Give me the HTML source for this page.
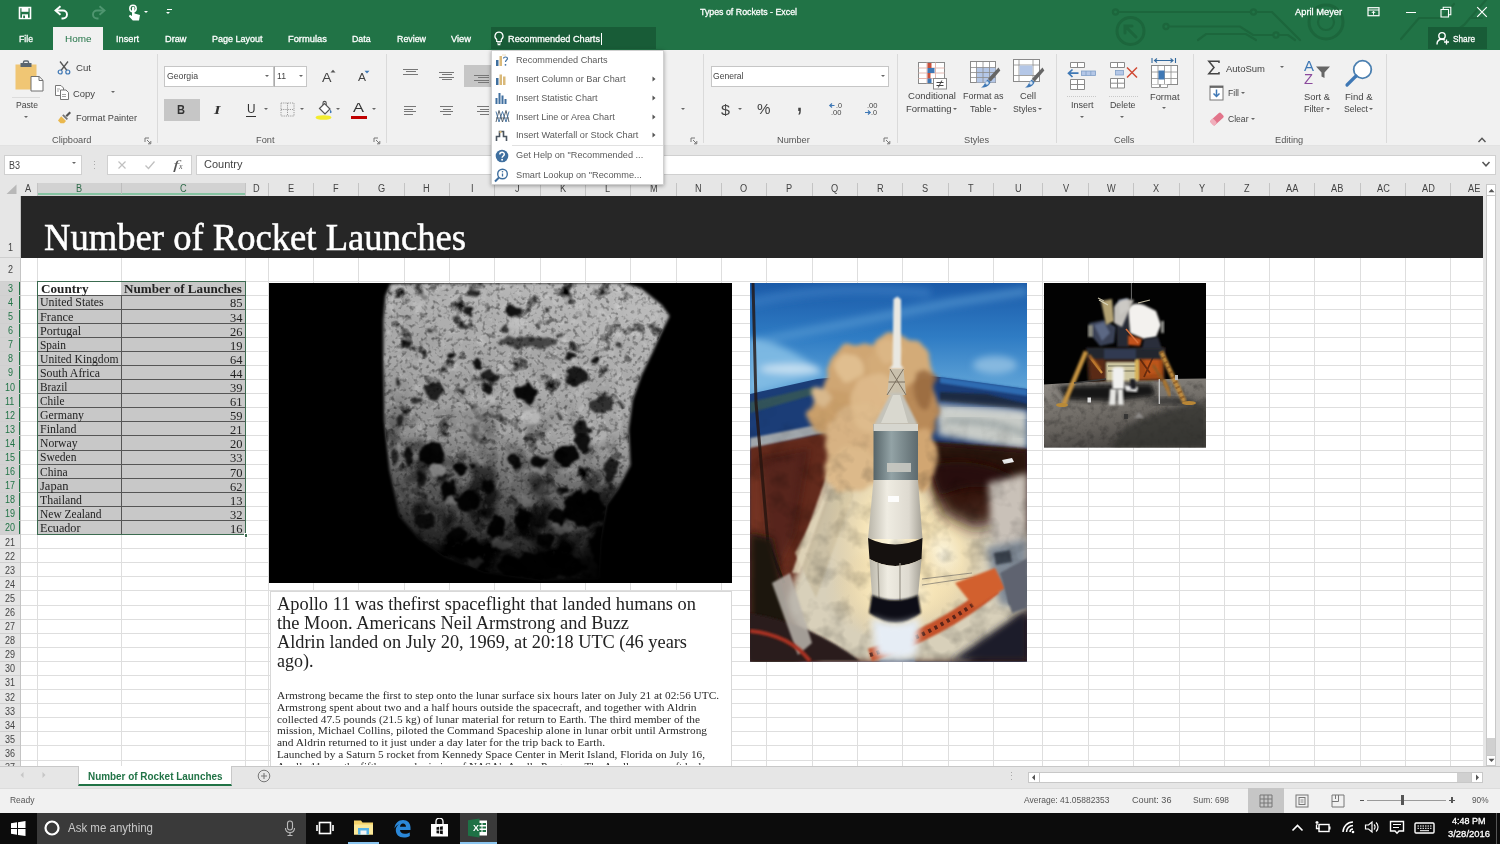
<!DOCTYPE html>
<html><head><meta charset="utf-8"><title>Types of Rockets - Excel</title>
<style>
html,body{margin:0;padding:0;}
body{width:1500px;height:844px;overflow:hidden;position:relative;background:#fff;font-family:"Liberation Sans",sans-serif;}
.b{position:absolute;display:block;}
.t{position:absolute;display:block;white-space:pre;transform-origin:0 50%;}
</style></head><body>

<div class="b" style="left:0px;top:0px;width:1500.00px;height:50.00px;background:#217346;"></div>
<svg class="b" style="left:1050px;top:0px;" width="450" height="50" viewBox="0 0 450 50"><g fill="none" stroke="#1c663c" stroke-width="2.2" stroke-linecap="round">
<circle cx="65.5" cy="12" r="2.6"/><path d="M68.5 12H201"/><circle cx="203.5" cy="12" r="2.6"/><path d="M206 12H222L250 40"/>
<circle cx="116" cy="26.5" r="2.6"/><path d="M119 26.5H190L203 35H223"/><circle cx="226" cy="35" r="2.6"/><path d="M229 35H238L245 40"/>
<path d="M148 40L156 34H196L206 40"/>
<circle cx="80.5" cy="31" r="13.5" stroke-width="3"/><path d="M86 37L75 26M75 33V26H82" stroke-width="3"/>
<circle cx="276" cy="22" r="17" stroke-width="3"/><circle cx="276" cy="22" r="8"/>
<path d="M351 39L369 18H392L404 4"/><path d="M395 39L414 25L436 0"/><path d="M420 18H432"/>
</g></svg>
<svg class="b" style="left:18px;top:6px;" width="14" height="14" viewBox="0 0 14 14"><path d="M1.5 1.5h11v11h-11z" fill="none" stroke="#fff" stroke-width="1.6"/><rect x="3.5" y="1.5" width="7" height="4.3" fill="#fff"/><rect x="4" y="8.3" width="6" height="4.5" fill="#fff"/><rect x="5.2" y="9.6" width="1.8" height="2.5" fill="#217346"/></svg>
<svg class="b" style="left:54px;top:5px;" width="16" height="16" viewBox="0 0 16 16"><path d="M2.5 5.5H9a4 4 0 0 1 0 8H7.5" fill="none" stroke="#fff" stroke-width="1.9"/><path d="M6.5 1.2L1.5 5.5L6.5 9.8" fill="none" stroke="#fff" stroke-width="1.9"/></svg>
<svg class="b" style="left:90px;top:5px;" width="16" height="16" viewBox="0 0 16 16"><path d="M13.5 5.5H7a4 4 0 0 0 0 8H8.5" fill="none" stroke="#4f9670" stroke-width="1.9"/><path d="M9.5 1.2L14.5 5.5L9.5 9.8" fill="none" stroke="#4f9670" stroke-width="1.9"/></svg>
<svg class="b" style="left:126px;top:4px;" width="16" height="18" viewBox="0 0 16 18"><circle cx="7" cy="4.5" r="3.2" fill="none" stroke="#fff" stroke-width="1.5"/><path d="M6 4v8l-2-1.2-1.2 1.4 4 4.3h6.2l1-5.5-5.5-1.4V4a1.2 1.2 0 0 0-2.5 0z" fill="#fff"/></svg>
<div class="b" style="left:144.4px;top:11.2px;width:0;height:0;border-left:2.6px solid transparent;border-right:2.6px solid transparent;border-top:2.6px solid #fff;"></div>
<div class="b" style="left:166.5px;top:9px;width:5.00px;height:1.20px;background:#fff;"></div>
<div class="b" style="left:166.4px;top:12.2px;width:0;height:0;border-left:2.6px solid transparent;border-right:2.6px solid transparent;border-top:2.6px solid #fff;"></div>
<span class="t" style="left:700.0px;top:6.0px;font-size:9.5px;line-height:12px;color:#fff;font-family:'Liberation Sans',sans-serif;transform:scaleX(0.9279);-webkit-text-stroke:0.3px #fff;">Types of Rockets - Excel</span>
<span class="t" style="left:1294.5px;top:6.0px;font-size:9.5px;line-height:12px;color:#fff;font-family:'Liberation Sans',sans-serif;transform:scaleX(0.9805);-webkit-text-stroke:0.3px #fff;">April Meyer</span>
<svg class="b" style="left:1367px;top:6px;" width="14" height="12" viewBox="0 0 14 12"><rect x="1" y="1.7" width="11" height="8" fill="none" stroke="#fff" stroke-width="1.2"/><path d="M1 4h11" stroke="#fff" stroke-width="1"/><path d="M6.5 8.7V5.4M4.8 7L6.5 5.2L8.2 7" stroke="#fff" stroke-width="1" fill="none"/></svg>
<div class="b" style="left:1406px;top:11.5px;width:9.50px;height:1.20px;background:#fff;"></div>
<svg class="b" style="left:1440px;top:6px;" width="12" height="12" viewBox="0 0 12 12"><path d="M1 3.5h7.5v7.5h-7.5z M3.2 3.3V1.2h7.6v7.6H8.7" fill="none" stroke="#fff" stroke-width="1.1"/></svg>
<svg class="b" style="left:1476px;top:6px;" width="12" height="12" viewBox="0 0 12 12"><path d="M1.2 1.2l9.6 9.6M10.8 1.2l-9.6 9.6" stroke="#fff" stroke-width="1.2"/></svg>
<div class="b" style="left:52.5px;top:27px;width:50.50px;height:23.00px;background:#f1f1f1;"></div>
<span class="t" style="left:18.5px;top:32.5px;font-size:9.5px;line-height:12px;color:#fff;font-family:'Liberation Sans',sans-serif;transform:scaleX(0.9146);-webkit-text-stroke:0.3px #fff;">File</span>
<span class="t" style="left:116.0px;top:32.5px;font-size:9.5px;line-height:12px;color:#fff;font-family:'Liberation Sans',sans-serif;transform:scaleX(0.9680);-webkit-text-stroke:0.3px #fff;">Insert</span>
<span class="t" style="left:164.5px;top:32.5px;font-size:9.5px;line-height:12px;color:#fff;font-family:'Liberation Sans',sans-serif;transform:scaleX(0.9698);-webkit-text-stroke:0.3px #fff;">Draw</span>
<span class="t" style="left:211.5px;top:32.5px;font-size:9.5px;line-height:12px;color:#fff;font-family:'Liberation Sans',sans-serif;transform:scaleX(0.9466);-webkit-text-stroke:0.3px #fff;">Page Layout</span>
<span class="t" style="left:287.6px;top:32.5px;font-size:9.5px;line-height:12px;color:#fff;font-family:'Liberation Sans',sans-serif;transform:scaleX(0.9800);-webkit-text-stroke:0.3px #fff;">Formulas</span>
<span class="t" style="left:352.0px;top:32.5px;font-size:9.5px;line-height:12px;color:#fff;font-family:'Liberation Sans',sans-serif;transform:scaleX(0.9269);-webkit-text-stroke:0.3px #fff;">Data</span>
<span class="t" style="left:396.6px;top:32.5px;font-size:9.5px;line-height:12px;color:#fff;font-family:'Liberation Sans',sans-serif;transform:scaleX(0.9310);-webkit-text-stroke:0.3px #fff;">Review</span>
<span class="t" style="left:451.0px;top:32.5px;font-size:9.5px;line-height:12px;color:#fff;font-family:'Liberation Sans',sans-serif;transform:scaleX(0.9794);-webkit-text-stroke:0.3px #fff;">View</span>
<span class="t" style="left:64.5px;top:32.5px;font-size:9.5px;line-height:12px;color:#217346;font-family:'Liberation Sans',sans-serif;transform:scaleX(1.0457);">Home</span>
<div class="b" style="left:490.5px;top:27px;width:165.50px;height:22.00px;background:#185c37;"></div>
<svg class="b" style="left:493px;top:31px;" width="12" height="15" viewBox="0 0 12 15"><path d="M6 1.2a4 4 0 0 0-2.3 7.3V10.5h4.6V8.5A4 4 0 0 0 6 1.2z" fill="none" stroke="#fff" stroke-width="1.2"/><path d="M4 12h4M4.6 13.6h2.8" stroke="#fff" stroke-width="1.1"/></svg>
<span class="t" style="left:508.2px;top:32.5px;font-size:9.5px;line-height:12px;color:#fff;font-family:'Liberation Sans',sans-serif;transform:scaleX(0.9680);-webkit-text-stroke:0.3px #fff;">Recommended Charts</span>
<div class="b" style="left:600.6px;top:32.5px;width:0.90px;height:12.00px;background:#fff;"></div>
<div class="b" style="left:1427.5px;top:27px;width:59.00px;height:22.00px;background:#185c37;"></div>
<svg class="b" style="left:1436px;top:31px;" width="14" height="15" viewBox="0 0 14 15"><circle cx="6" cy="4.8" r="3.2" fill="none" stroke="#fff" stroke-width="1.4"/><path d="M1 13.5c0-3.5 2.3-5.2 5-5.2 1.2 0 2 .3 2.8.8" fill="none" stroke="#fff" stroke-width="1.4"/><path d="M10.5 8.5v5M8 11h5" stroke="#fff" stroke-width="1.3"/></svg>
<span class="t" style="left:1453.0px;top:32.5px;font-size:9.5px;line-height:12px;color:#fff;font-family:'Liberation Sans',sans-serif;transform:scaleX(0.8678);-webkit-text-stroke:0.3px #fff;">Share</span>
<div class="b" style="left:0px;top:50px;width:1500.00px;height:96.00px;background:#f1f1f1;"></div>
<div class="b" style="left:0px;top:145px;width:1500.00px;height:1.00px;background:#e2e2e2;"></div>
<div class="b" style="left:156.5px;top:54px;width:1.00px;height:89.00px;background:#dadada;"></div>
<div class="b" style="left:385.5px;top:54px;width:1.00px;height:89.00px;background:#dadada;"></div>
<div class="b" style="left:703px;top:54px;width:1.00px;height:89.00px;background:#dadada;"></div>
<div class="b" style="left:896.5px;top:54px;width:1.00px;height:89.00px;background:#dadada;"></div>
<div class="b" style="left:1055.5px;top:54px;width:1.00px;height:89.00px;background:#dadada;"></div>
<div class="b" style="left:1192.5px;top:54px;width:1.00px;height:89.00px;background:#dadada;"></div>
<div class="b" style="left:1386px;top:54px;width:1.00px;height:89.00px;background:#dadada;"></div>
<span class="t" style="left:51.8px;top:133.7px;font-size:9.5px;line-height:12px;color:#555;font-family:'Liberation Sans',sans-serif;transform:scaleX(0.9700);">Clipboard</span>
<span class="t" style="left:255.8px;top:133.7px;font-size:9.5px;line-height:12px;color:#555;font-family:'Liberation Sans',sans-serif;transform:scaleX(0.9700);">Font</span>
<span class="t" style="left:776.9px;top:133.7px;font-size:9.5px;line-height:12px;color:#555;font-family:'Liberation Sans',sans-serif;transform:scaleX(0.9700);">Number</span>
<span class="t" style="left:963.5px;top:133.7px;font-size:9.5px;line-height:12px;color:#555;font-family:'Liberation Sans',sans-serif;transform:scaleX(0.9700);">Styles</span>
<span class="t" style="left:1113.8px;top:133.7px;font-size:9.5px;line-height:12px;color:#555;font-family:'Liberation Sans',sans-serif;transform:scaleX(0.9700);">Cells</span>
<span class="t" style="left:1274.9px;top:133.7px;font-size:9.5px;line-height:12px;color:#555;font-family:'Liberation Sans',sans-serif;transform:scaleX(0.9700);">Editing</span>
<svg class="b" style="left:144.0px;top:136.5px;" width="8" height="8" viewBox="0 0 8 8"><path d="M1 5V1h4" fill="none" stroke="#777" stroke-width="1"/><path d="M3 3l3.5 3.5M6.8 4v2.8H4" fill="none" stroke="#777" stroke-width="1"/></svg>
<svg class="b" style="left:373.0px;top:136.5px;" width="8" height="8" viewBox="0 0 8 8"><path d="M1 5V1h4" fill="none" stroke="#777" stroke-width="1"/><path d="M3 3l3.5 3.5M6.8 4v2.8H4" fill="none" stroke="#777" stroke-width="1"/></svg>
<svg class="b" style="left:690.0px;top:136.5px;" width="8" height="8" viewBox="0 0 8 8"><path d="M1 5V1h4" fill="none" stroke="#777" stroke-width="1"/><path d="M3 3l3.5 3.5M6.8 4v2.8H4" fill="none" stroke="#777" stroke-width="1"/></svg>
<svg class="b" style="left:883.0px;top:136.5px;" width="8" height="8" viewBox="0 0 8 8"><path d="M1 5V1h4" fill="none" stroke="#777" stroke-width="1"/><path d="M3 3l3.5 3.5M6.8 4v2.8H4" fill="none" stroke="#777" stroke-width="1"/></svg>
<svg class="b" style="left:1477px;top:136px;" width="10" height="8" viewBox="0 0 10 8"><path d="M1.5 6L5 2.3L8.5 6" fill="none" stroke="#555" stroke-width="1.4"/></svg>
<svg class="b" style="left:14px;top:60px;" width="32" height="36" viewBox="0 0 32 36"><rect x="1.5" y="4.5" width="21" height="25" fill="#f0c674"/><rect x="6.5" y="3" width="11" height="4" fill="#5b6670"/><rect x="9.5" y="1" width="5" height="3" rx="1.2" fill="none" stroke="#5b6670" stroke-width="1.4"/>
<path d="M17 16.5h8.2l3.8 3.8v10.7H17z" fill="#fff" stroke="#707070" stroke-width="1"/><path d="M25 16.5v4h4" fill="none" stroke="#707070" stroke-width="1"/></svg>
<div class="b" style="left:12px;top:96.5px;width:28.00px;height:0.80px;background:#dcdcdc;"></div>
<span class="t" style="left:15.5px;top:98.5px;font-size:9.5px;line-height:12px;color:#444;font-family:'Liberation Sans',sans-serif;transform:scaleX(0.9056);">Paste</span>
<div class="b" style="left:23.6px;top:115.8px;width:0;height:0;border-left:2.4px solid transparent;border-right:2.4px solid transparent;border-top:2.4px solid #666;"></div>
<svg class="b" style="left:56px;top:60px;" width="16" height="16" viewBox="0 0 16 16"><path d="M4 1.5L11 10.5M12 1.5L5 10.5" stroke="#555" stroke-width="1.3" fill="none"/><circle cx="4.2" cy="12" r="2" fill="none" stroke="#3f78b5" stroke-width="1.2"/><circle cx="11.8" cy="12" r="2" fill="none" stroke="#3f78b5" stroke-width="1.2"/></svg>
<span class="t" style="left:75.5px;top:62.3px;font-size:9.5px;line-height:12px;color:#444;font-family:'Liberation Sans',sans-serif;transform:scaleX(1.0146);">Cut</span>
<svg class="b" style="left:54px;top:84px;" width="16" height="17" viewBox="0 0 16 17"><path d="M1.5 1.5h5.5l2.5 2.5v7.5h-8z" fill="#fff" stroke="#777" stroke-width="1"/><path d="M6.5 6h5.5l2.5 2.5v7h-8z" fill="#fff" stroke="#777" stroke-width="1"/><path d="M3 5h3M3 7h2M8 10.5h4M8 12.5h4" stroke="#999" stroke-width="0.9"/></svg>
<span class="t" style="left:73.0px;top:87.5px;font-size:9.5px;line-height:12px;color:#444;font-family:'Liberation Sans',sans-serif;transform:scaleX(0.9920);">Copy</span>
<div class="b" style="left:110.6px;top:90.8px;width:0;height:0;border-left:2.4px solid transparent;border-right:2.4px solid transparent;border-top:2.4px solid #666;"></div>
<svg class="b" style="left:57px;top:110px;" width="15" height="15" viewBox="0 0 15 15"><path d="M8.5 5.5l4-4 1.5 1.5-4 4z" fill="#555"/><path d="M4.2 6.2l4.8 4.8-2 2.2H3.5L1 10.5z" fill="#eab84e"/><path d="M6.5 4.2l4.5 4.5-1.3 1.3-4.5-4.5z" fill="#777"/></svg>
<span class="t" style="left:75.5px;top:112.3px;font-size:9.5px;line-height:12px;color:#444;font-family:'Liberation Sans',sans-serif;transform:scaleX(0.9709);">Format Painter</span>
<div class="b" style="left:163.5px;top:65.5px;width:110.00px;height:21.00px;background:#fff;border:1px solid #c6c6c6;box-sizing:border-box;"></div>
<div class="b" style="left:273.5px;top:65.5px;width:33.00px;height:21.00px;background:#fff;border:1px solid #c6c6c6;border-left:1px solid #ababab;box-sizing:border-box;"></div>
<span class="t" style="left:166.5px;top:70.3px;font-size:9.5px;line-height:12px;color:#444;font-family:'Liberation Sans',sans-serif;transform:scaleX(0.9172);">Georgia</span>
<div class="b" style="left:265.2px;top:74.85px;width:0;height:0;border-left:2.3px solid transparent;border-right:2.3px solid transparent;border-top:2.3px solid #666;"></div>
<span class="t" style="left:276.5px;top:70.0px;font-size:9.5px;line-height:12px;color:#444;font-family:'Liberation Sans',sans-serif;transform:scaleX(0.9126);">11</span>
<div class="b" style="left:299.2px;top:74.85px;width:0;height:0;border-left:2.3px solid transparent;border-right:2.3px solid transparent;border-top:2.3px solid #666;"></div>
<span class="t" style="left:321.5px;top:68.5px;font-size:13px;line-height:17px;color:#444;font-family:'Liberation Sans',sans-serif;transform:scaleX(1.0956);">A</span>
<svg class="b" style="left:329.5px;top:69px;" width="6" height="4" viewBox="0 0 6 4"><path d="M0.5 3.5L3 0.8L5.5 3.5z" fill="#555"/></svg>
<span class="t" style="left:357.5px;top:70.0px;font-size:11.5px;line-height:15px;color:#444;font-family:'Liberation Sans',sans-serif;transform:scaleX(1.0430);">A</span>
<svg class="b" style="left:363.5px;top:69.5px;" width="6" height="4" viewBox="0 0 6 4"><path d="M0.5 0.8h5L3 3.5z" fill="#3f78b5"/></svg>
<div class="b" style="left:164px;top:99px;width:35.80px;height:21.50px;background:#c6c6c6;"></div>
<span class="t" style="left:177.0px;top:101.7px;font-size:12.5px;line-height:16px;color:#333;font-family:'Liberation Sans',sans-serif;transform:scaleX(0.8862);font-weight:700;">B</span>
<span class="t" style="left:214.0px;top:101.0px;font-size:13px;line-height:17px;color:#333;font-family:'Liberation Serif',serif;transform:scaleX(1.2848);font-weight:700;font-style:italic;">I</span>
<span class="t" style="left:246.5px;top:101.0px;font-size:12px;line-height:16px;color:#333;font-family:'Liberation Sans',sans-serif;transform:scaleX(0.9808);">U</span>
<div class="b" style="left:246px;top:116px;width:9.50px;height:1.00px;background:#333;"></div>
<div class="b" style="left:263.7px;top:107.85px;width:0;height:0;border-left:2.3px solid transparent;border-right:2.3px solid transparent;border-top:2.3px solid #666;"></div>
<svg class="b" style="left:279.5px;top:102px;" width="15" height="15" viewBox="0 0 15 15"><rect x="1" y="1" width="13" height="13" fill="none" stroke="#9a9a9a" stroke-width="1" stroke-dasharray="1.2 1"/><path d="M7.5 1v13M1 7.5h13" stroke="#9a9a9a" stroke-width="1" stroke-dasharray="1.2 1"/></svg>
<div class="b" style="left:299.7px;top:107.85px;width:0;height:0;border-left:2.3px solid transparent;border-right:2.3px solid transparent;border-top:2.3px solid #666;"></div>
<svg class="b" style="left:314px;top:100px;" width="20" height="22" viewBox="0 0 20 22"><path d="M5.5 8.5L10.5 3.5l5.5 5.5-5 5z" fill="#fff" stroke="#555" stroke-width="1.2"/><path d="M9 5V3a1.6 1.6 0 0 1 3.2 0v2" fill="none" stroke="#555" stroke-width="1.1"/><path d="M16.5 9.5c1.2 1.8 1.5 3 .5 3.6s-1.700-.8-.5-3.600z" fill="#3f78b5"/><ellipse cx="9.500" cy="17.500" rx="8" ry="2.300" fill="#f3ec2d"/></svg>
<div class="b" style="left:335.7px;top:107.85px;width:0;height:0;border-left:2.3px solid transparent;border-right:2.3px solid transparent;border-top:2.3px solid #666;"></div>
<span class="t" style="left:353.0px;top:98.5px;font-size:13.5px;line-height:18px;color:#333;font-family:'Liberation Sans',sans-serif;transform:scaleX(1.2216);">A</span>
<div class="b" style="left:351px;top:115.5px;width:16.00px;height:3.00px;background:#c00000;"></div>
<div class="b" style="left:372.2px;top:107.85px;width:0;height:0;border-left:2.3px solid transparent;border-right:2.3px solid transparent;border-top:2.3px solid #666;"></div>
<div class="b" style="left:403.0px;top:68.5px;width:15.00px;height:1.00px;background:#777;"></div><div class="b" style="left:405.5px;top:71.0px;width:10.00px;height:1.00px;background:#777;"></div><div class="b" style="left:403.0px;top:73.5px;width:15.00px;height:1.00px;background:#777;"></div>
<div class="b" style="left:439.0px;top:72.0px;width:15.00px;height:1.00px;background:#777;"></div><div class="b" style="left:441.5px;top:74.4px;width:10.00px;height:1.00px;background:#777;"></div><div class="b" style="left:439.0px;top:76.8px;width:15.00px;height:1.00px;background:#777;"></div><div class="b" style="left:441.5px;top:79.2px;width:10.00px;height:1.00px;background:#777;"></div>
<div class="b" style="left:464px;top:65px;width:26.50px;height:22.00px;background:#c6c6c6;"></div>
<div class="b" style="left:474px;top:75.0px;width:15.00px;height:1.00px;background:#777;"></div><div class="b" style="left:478px;top:77.4px;width:11.00px;height:1.00px;background:#777;"></div><div class="b" style="left:474px;top:79.8px;width:15.00px;height:1.00px;background:#777;"></div><div class="b" style="left:478px;top:82.2px;width:11.00px;height:1.00px;background:#777;"></div>
<div class="b" style="left:404px;top:106.0px;width:12.00px;height:1.00px;background:#777;"></div><div class="b" style="left:404px;top:108.5px;width:9.00px;height:1.00px;background:#777;"></div><div class="b" style="left:404px;top:111.0px;width:12.00px;height:1.00px;background:#777;"></div><div class="b" style="left:404px;top:113.5px;width:9.00px;height:1.00px;background:#777;"></div>
<div class="b" style="left:440.0px;top:106.0px;width:13.00px;height:1.00px;background:#777;"></div><div class="b" style="left:442.5px;top:108.5px;width:8.00px;height:1.00px;background:#777;"></div><div class="b" style="left:440.0px;top:111.0px;width:13.00px;height:1.00px;background:#777;"></div><div class="b" style="left:442.5px;top:113.5px;width:8.00px;height:1.00px;background:#777;"></div>
<div class="b" style="left:477px;top:106.0px;width:12.00px;height:1.00px;background:#777;"></div><div class="b" style="left:480px;top:108.5px;width:9.00px;height:1.00px;background:#777;"></div><div class="b" style="left:477px;top:111.0px;width:12.00px;height:1.00px;background:#777;"></div><div class="b" style="left:480px;top:113.5px;width:9.00px;height:1.00px;background:#777;"></div>
<div class="b" style="left:681.4000000000001px;top:108.35px;width:0;height:0;border-left:2.3px solid transparent;border-right:2.3px solid transparent;border-top:2.3px solid #666;"></div>
<div class="b" style="left:710.5px;top:65.5px;width:178.00px;height:21.00px;background:#fff;border:1px solid #c6c6c6;box-sizing:border-box;"></div>
<span class="t" style="left:713.0px;top:70.3px;font-size:9.5px;line-height:12px;color:#444;font-family:'Liberation Sans',sans-serif;transform:scaleX(0.9024);">General</span>
<div class="b" style="left:880.7px;top:74.85px;width:0;height:0;border-left:2.3px solid transparent;border-right:2.3px solid transparent;border-top:2.3px solid #666;"></div>
<span class="t" style="left:720.5px;top:99.5px;font-size:15px;line-height:20px;color:#444;font-family:'Liberation Sans',sans-serif;transform:scaleX(1.0788);">$</span>
<div class="b" style="left:738.2px;top:108.35px;width:0;height:0;border-left:2.3px solid transparent;border-right:2.3px solid transparent;border-top:2.3px solid #666;"></div>
<span class="t" style="left:757.0px;top:100.0px;font-size:14.5px;line-height:19px;color:#444;font-family:'Liberation Sans',sans-serif;transform:scaleX(1.0471);">%</span>
<span class="t" style="left:796.5px;top:89.0px;font-size:22px;line-height:29px;color:#444;font-family:'Liberation Sans',sans-serif;transform:scaleX(0.8180);font-weight:700;">,</span>
<svg class="b" style="left:828px;top:102px;" width="16" height="15" viewBox="0 0 16 15"><path d="M6.5 3.5H2M4 1.5L1.8 3.500 4 5.500" stroke="#3f78b5" stroke-width="1.2" fill="none"/></svg>
<span class="t" style="left:835.5px;top:101.7px;font-size:6.5px;line-height:8px;color:#444;font-family:'Liberation Sans',sans-serif;transform:scaleX(1.1068);">.0</span>
<span class="t" style="left:831.0px;top:108.5px;font-size:6.5px;line-height:8px;color:#444;font-family:'Liberation Sans',sans-serif;transform:scaleX(1.1620);">.00</span>
<span class="t" style="left:866.5px;top:101.7px;font-size:6.5px;line-height:8px;color:#444;font-family:'Liberation Sans',sans-serif;transform:scaleX(1.1620);">.00</span>
<svg class="b" style="left:864px;top:109px;" width="10" height="8" viewBox="0 0 10 8"><path d="M1 3.5H6M4 1.5L6.200 3.500 4 5.500" stroke="#3f78b5" stroke-width="1.2" fill="none"/></svg>
<span class="t" style="left:871.0px;top:108.5px;font-size:6.5px;line-height:8px;color:#444;font-family:'Liberation Sans',sans-serif;transform:scaleX(1.1068);">.0</span>
<svg class="b" style="left:917px;top:61px;" width="31" height="30" viewBox="0 0 31 30"><rect x="1.500" y="1.500" width="26" height="21" fill="#fff" stroke="#8a8a8a" stroke-width="1"/>
<path d="M1.500 7h26M1.500 12h26M1.500 17.500h26M10 1.500v21M18.500 1.500v21" stroke="#e3b8b0" stroke-width="1"/>
<rect x="10.500" y="2" width="4" height="5" fill="#c8503c"/><rect x="10.500" y="7" width="7" height="5" fill="#3f78b5"/><rect x="10.500" y="12" width="3" height="5.500" fill="#c8503c"/><rect x="10.500" y="17.500" width="4" height="4.500" fill="#3f78b5"/>
<rect x="16.500" y="17.500" width="13" height="10.500" fill="#fff" stroke="#8a8a8a" stroke-width="1"/><path d="M19.500 21.500h7M19.500 24.500h7M24.800 19.500l-3.500 7" stroke="#444" stroke-width="1"/></svg>
<span class="t" style="left:907.5px;top:90.4px;font-size:9.5px;line-height:12px;color:#444;font-family:'Liberation Sans',sans-serif;transform:scaleX(1.0098);">Conditional</span>
<span class="t" style="left:905.5px;top:103.0px;font-size:9.5px;line-height:12px;color:#444;font-family:'Liberation Sans',sans-serif;transform:scaleX(1.0021);">Formatting</span>
<div class="b" style="left:953.4px;top:107.95px;width:0;height:0;border-left:2.1px solid transparent;border-right:2.1px solid transparent;border-top:2.1px solid #666;"></div>
<svg class="b" style="left:969px;top:60px;" width="32" height="31" viewBox="0 0 32 31"><rect x="1.500" y="1.500" width="25" height="21" fill="#fff" stroke="#8a8a8a" stroke-width="1"/>
<path d="M7.500 7.500h19v15h-19z" fill="#b4c7e7"/>
<path d="M1.500 7.500h25M1.500 12.500h25M1.500 17.500h25M7.500 1.500v21M14 1.500v21M20.500 1.500v21" stroke="#8a8a8a" stroke-width="0.800"/>
<path d="M29.500 7.500l1.800 3-9.500 11-3-2.500z" fill="#666"/><path d="M18.500 19.500l3 2.500c-1 3.500-3.500 5.500-9.500 5.500 3.500-1.500 3.500-5 6.500-8z" fill="#3f78b5"/><circle cx="18" cy="23" r="1.700" fill="#d8e4f2"/></svg>
<span class="t" style="left:963.0px;top:90.4px;font-size:9.5px;line-height:12px;color:#444;font-family:'Liberation Sans',sans-serif;transform:scaleX(0.9472);">Format as</span>
<span class="t" style="left:969.5px;top:103.0px;font-size:9.5px;line-height:12px;color:#444;font-family:'Liberation Sans',sans-serif;transform:scaleX(0.9467);">Table</span>
<div class="b" style="left:992.9px;top:107.95px;width:0;height:0;border-left:2.1px solid transparent;border-right:2.1px solid transparent;border-top:2.1px solid #666;"></div>
<svg class="b" style="left:1012px;top:58px;" width="33" height="33" viewBox="0 0 33 33"><rect x="1.500" y="1.500" width="26" height="22" fill="#fff" stroke="#8a8a8a" stroke-width="1"/>
<path d="M1.500 7h26M1.500 17.500h26M7 1.500v22M21 1.500v22" stroke="#8a8a8a" stroke-width="0.800"/>
<rect x="7.500" y="7.500" width="13" height="9.500" fill="#b4c7e7"/>
<path d="M30.500 9.500l1.800 3-9.500 11-3-2.500z" fill="#666"/><path d="M19.500 21.500l3 2.500c-1 3.500-3.500 5.500-9.500 5.500 3.500-1.500 3.500-5 6.500-8z" fill="#3f78b5"/><circle cx="19" cy="25" r="1.700" fill="#d8e4f2"/></svg>
<span class="t" style="left:1019.5px;top:90.4px;font-size:9.5px;line-height:12px;color:#444;font-family:'Liberation Sans',sans-serif;transform:scaleX(0.9777);">Cell</span>
<span class="t" style="left:1012.5px;top:103.0px;font-size:9.5px;line-height:12px;color:#444;font-family:'Liberation Sans',sans-serif;transform:scaleX(0.9084);">Styles</span>
<div class="b" style="left:1038.4px;top:107.95px;width:0;height:0;border-left:2.1px solid transparent;border-right:2.1px solid transparent;border-top:2.1px solid #666;"></div>
<svg class="b" style="left:1066px;top:61px;" width="32" height="30" viewBox="0 0 32 30"><path d="M4.500 1.500h14v5h-14zM11.500 1.500v5" fill="#fff" stroke="#8a8a8a" stroke-width="1"/>
<path d="M4.500 18.500h14v10h-14zM11.500 18.500v10M4.500 23.500h14" fill="#fff" stroke="#8a8a8a" stroke-width="1"/>
<rect x="15.500" y="10" width="14" height="4.500" fill="#b4c7e7" stroke="#7f9fc6" stroke-width="0.800"/><path d="M20 10v4.500M24.800 10v4.500" stroke="#7f9fc6" stroke-width="0.800"/>
<path d="M12.500 12.200H3M6.500 8.500L2.500 12.200l4 3.800" stroke="#3f78b5" stroke-width="1.700" fill="none"/></svg>
<div class="b" style="left:1067px;top:96px;width:29.00px;height:0.80px;border-top:1px dotted #c8c8c8;"></div>
<span class="t" style="left:1070.5px;top:99.0px;font-size:9.5px;line-height:12px;color:#444;font-family:'Liberation Sans',sans-serif;transform:scaleX(0.9470);">Insert</span>
<div class="b" style="left:1079.7px;top:115.85px;width:0;height:0;border-left:2.3px solid transparent;border-right:2.3px solid transparent;border-top:2.3px solid #666;"></div>
<svg class="b" style="left:1109px;top:61px;" width="32" height="30" viewBox="0 0 32 30"><path d="M1.500 1.500h14v5h-14zM8.500 1.500v5" fill="#fff" stroke="#8a8a8a" stroke-width="1"/>
<path d="M1.500 17.500h14v9.500h-14zM8.500 17.500v9.500M1.500 22.200h14" fill="#fff" stroke="#8a8a8a" stroke-width="1"/>
<rect x="6.500" y="9.500" width="8" height="4.500" fill="#b4c7e7" stroke="#7f9fc6" stroke-width="0.800"/>
<path d="M18 6.500l10 10M28 6.500l-10 10" stroke="#d04a35" stroke-width="1.500" fill="none"/></svg>
<div class="b" style="left:1109px;top:96px;width:29.00px;height:0.80px;border-top:1px dotted #c8c8c8;"></div>
<span class="t" style="left:1110.0px;top:99.0px;font-size:9.5px;line-height:12px;color:#444;font-family:'Liberation Sans',sans-serif;transform:scaleX(0.9286);">Delete</span>
<div class="b" style="left:1120.2px;top:115.85px;width:0;height:0;border-left:2.3px solid transparent;border-right:2.3px solid transparent;border-top:2.3px solid #666;"></div>
<svg class="b" style="left:1150px;top:57px;" width="30" height="33" viewBox="0 0 30 33"><path d="M2 1v5M25.500 1v5M4.500 3.500h18.500M7 1.500L4.500 3.500l2.500 2M20.500 1.500l2.500 2-2.500 2" stroke="#346a9e" stroke-width="1.100" fill="none"/>
<rect x="1.500" y="8.500" width="26" height="19" fill="#fff" stroke="#8a8a8a" stroke-width="1"/><path d="M1.500 15h26M1.500 21.500h26M8 8.500v19M14.500 8.500v19M21 8.500v19" stroke="#8a8a8a" stroke-width="0.800"/>
<rect x="8.500" y="13.500" width="6" height="9" fill="#3f78b5"/><path d="M1.500 27.500v3h8v-3M10.500 27.500v3h7v-3" fill="#fff" stroke="#8a8a8a" stroke-width="0.900"/></svg>
<span class="t" style="left:1149.5px;top:90.5px;font-size:9.5px;line-height:12px;color:#444;font-family:'Liberation Sans',sans-serif;transform:scaleX(0.9805);">Format</span>
<div class="b" style="left:1161.7px;top:107.35px;width:0;height:0;border-left:2.3px solid transparent;border-right:2.3px solid transparent;border-top:2.3px solid #666;"></div>
<svg class="b" style="left:1207px;top:60px;" width="14" height="15" viewBox="0 0 14 15"><path d="M12 3V1.200H1.800L7 7.500 1.800 13.800H12V12" fill="none" stroke="#444" stroke-width="1.500"/></svg>
<span class="t" style="left:1225.5px;top:62.5px;font-size:9.5px;line-height:12px;color:#444;font-family:'Liberation Sans',sans-serif;transform:scaleX(0.9980);">AutoSum</span>
<div class="b" style="left:1280.2px;top:65.85px;width:0;height:0;border-left:2.3px solid transparent;border-right:2.3px solid transparent;border-top:2.3px solid #666;"></div>
<svg class="b" style="left:1209px;top:85px;" width="15" height="16" viewBox="0 0 15 16"><rect x="1" y="1" width="13" height="14" fill="#fff" stroke="#777" stroke-width="1"/><path d="M1 2h13" stroke="#555" stroke-width="1.600"/><path d="M7.500 4.500v7M4.500 8.500l3 3 3-3" stroke="#3f78b5" stroke-width="1.500" fill="none"/></svg>
<span class="t" style="left:1228.0px;top:87.0px;font-size:9.5px;line-height:12px;color:#444;font-family:'Liberation Sans',sans-serif;transform:scaleX(0.9065);">Fill</span>
<div class="b" style="left:1241.4px;top:92.45px;width:0;height:0;border-left:2.1px solid transparent;border-right:2.1px solid transparent;border-top:2.1px solid #666;"></div>
<svg class="b" style="left:1208.5px;top:110.5px;" width="16" height="16" viewBox="0 0 16 16"><g transform="rotate(-42 8 8)"><rect x="1" y="4.800" width="14" height="6.400" rx="1.600" fill="#e2748a"/><rect x="1" y="4.800" width="4.500" height="6.400" rx="1.600" fill="#f0aebb"/></g></svg>
<span class="t" style="left:1228.0px;top:112.5px;font-size:9.5px;line-height:12px;color:#444;font-family:'Liberation Sans',sans-serif;transform:scaleX(0.9030);">Clear</span>
<div class="b" style="left:1250.9px;top:117.95px;width:0;height:0;border-left:2.1px solid transparent;border-right:2.1px solid transparent;border-top:2.1px solid #666;"></div>
<span class="t" style="left:1303.5px;top:57.0px;font-size:14px;line-height:18px;color:#3f78b5;font-family:'Liberation Sans',sans-serif;transform:scaleX(1.0709);">A</span>
<span class="t" style="left:1303.5px;top:70.0px;font-size:14px;line-height:18px;color:#8a4a9c;font-family:'Liberation Sans',sans-serif;transform:scaleX(1.0524);">Z</span>
<svg class="b" style="left:1315px;top:65px;" width="16" height="15" viewBox="0 0 16 15"><path d="M1 1.500h14l-5.500 6v5.500l-3-1.500v-4z" fill="#666"/></svg>
<span class="t" style="left:1303.5px;top:90.5px;font-size:9.5px;line-height:12px;color:#444;font-family:'Liberation Sans',sans-serif;transform:scaleX(0.9849);">Sort &amp;</span>
<span class="t" style="left:1303.5px;top:103.0px;font-size:9.5px;line-height:12px;color:#444;font-family:'Liberation Sans',sans-serif;transform:scaleX(0.9474);">Filter</span>
<div class="b" style="left:1325.9px;top:107.95px;width:0;height:0;border-left:2.1px solid transparent;border-right:2.1px solid transparent;border-top:2.1px solid #666;"></div>
<svg class="b" style="left:1344px;top:58px;" width="30" height="30" viewBox="0 0 30 30"><circle cx="18.500" cy="11.500" r="8.800" fill="#fff" stroke="#4a7fb0" stroke-width="1.800"/><path d="M12 18L3 27" stroke="#3f78b5" stroke-width="3.200" stroke-linecap="round"/></svg>
<span class="t" style="left:1345.0px;top:90.5px;font-size:9.5px;line-height:12px;color:#444;font-family:'Liberation Sans',sans-serif;transform:scaleX(1.0016);">Find &amp;</span>
<span class="t" style="left:1343.5px;top:103.0px;font-size:9.5px;line-height:12px;color:#444;font-family:'Liberation Sans',sans-serif;transform:scaleX(0.9090);">Select</span>
<div class="b" style="left:1369.4px;top:107.95px;width:0;height:0;border-left:2.1px solid transparent;border-right:2.1px solid transparent;border-top:2.1px solid #666;"></div>
<div class="b" style="left:0px;top:146px;width:1500.00px;height:50.00px;background:#e6e6e6;"></div>
<div class="b" style="left:3.5px;top:154.5px;width:78.50px;height:20.00px;background:#fff;border:1px solid #d0d0d0;box-sizing:border-box;"></div>
<span class="t" style="left:9.3px;top:158.7px;font-size:10px;line-height:13px;color:#444;font-family:'Liberation Sans',sans-serif;transform:scaleX(0.8993);">B3</span>
<div class="b" style="left:71.7px;top:162.1px;width:0;height:0;border-left:2.8px solid transparent;border-right:2.8px solid transparent;border-top:2.8px solid #666;"></div>
<div class="b" style="left:94px;top:160.5px;width:1.20px;height:1.20px;background:#aaa;"></div>
<div class="b" style="left:94px;top:164px;width:1.20px;height:1.20px;background:#aaa;"></div>
<div class="b" style="left:94px;top:167.5px;width:1.20px;height:1.20px;background:#aaa;"></div>
<div class="b" style="left:107px;top:154.5px;width:85.00px;height:20.00px;background:#fff;border:1px solid #d0d0d0;box-sizing:border-box;"></div>
<svg class="b" style="left:117px;top:160px;" width="10" height="10" viewBox="0 0 10 10"><path d="M1.500 1.500l7 7M8.500 1.500l-7 7" stroke="#c0c0c0" stroke-width="1.200"/></svg>
<svg class="b" style="left:144px;top:160px;" width="12" height="10" viewBox="0 0 12 10"><path d="M1.500 5.500l3 3 6-7" stroke="#c0c0c0" stroke-width="1.300" fill="none"/></svg>
<span class="t" style="left:173.0px;top:156.5px;font-size:12.5px;line-height:16px;color:#555;font-family:'Liberation Serif',serif;transform:scaleX(1.7277);font-style:italic;">f</span>
<span class="t" style="left:178.5px;top:161.5px;font-size:8px;line-height:10px;color:#555;font-family:'Liberation Serif',serif;transform:scaleX(0.9857);font-style:italic;">x</span>
<div class="b" style="left:196px;top:154.5px;width:1299.50px;height:20.00px;background:#fff;border:1px solid #d0d0d0;box-sizing:border-box;"></div>
<span class="t" style="left:204.0px;top:158.2px;font-size:10px;line-height:13px;color:#444;font-family:'Liberation Sans',sans-serif;transform:scaleX(1.0995);">Country</span>
<svg class="b" style="left:1481px;top:160px;" width="10" height="8" viewBox="0 0 10 8"><path d="M1.500 2L5 5.800 8.500 2" fill="none" stroke="#555" stroke-width="1.500"/></svg>
<div class="b" style="left:20px;top:196px;width:1463.00px;height:570.00px;background:#fff;"></div>
<div class="b" style="left:36.5px;top:257.5px;width:1.00px;height:508.50px;background:#dedede;"></div>
<div class="b" style="left:120.5px;top:257.5px;width:1.00px;height:508.50px;background:#dedede;"></div>
<div class="b" style="left:244.5px;top:257.5px;width:1.00px;height:508.50px;background:#dedede;"></div>
<div class="b" style="left:267.5px;top:257.5px;width:1.00px;height:508.50px;background:#dedede;"></div>
<div class="b" style="left:312.8px;top:257.5px;width:1.00px;height:508.50px;background:#dedede;"></div>
<div class="b" style="left:358.2px;top:257.5px;width:1.00px;height:508.50px;background:#dedede;"></div>
<div class="b" style="left:403.5px;top:257.5px;width:1.00px;height:508.50px;background:#dedede;"></div>
<div class="b" style="left:448.8px;top:257.5px;width:1.00px;height:508.50px;background:#dedede;"></div>
<div class="b" style="left:494.1px;top:257.5px;width:1.00px;height:508.50px;background:#dedede;"></div>
<div class="b" style="left:539.5px;top:257.5px;width:1.00px;height:508.50px;background:#dedede;"></div>
<div class="b" style="left:584.8px;top:257.5px;width:1.00px;height:508.50px;background:#dedede;"></div>
<div class="b" style="left:630.1px;top:257.5px;width:1.00px;height:508.50px;background:#dedede;"></div>
<div class="b" style="left:675.5px;top:257.5px;width:1.00px;height:508.50px;background:#dedede;"></div>
<div class="b" style="left:720.8px;top:257.5px;width:1.00px;height:508.50px;background:#dedede;"></div>
<div class="b" style="left:766.1px;top:257.5px;width:1.00px;height:508.50px;background:#dedede;"></div>
<div class="b" style="left:811.5px;top:257.5px;width:1.00px;height:508.50px;background:#dedede;"></div>
<div class="b" style="left:856.8px;top:257.5px;width:1.00px;height:508.50px;background:#dedede;"></div>
<div class="b" style="left:902.1px;top:257.5px;width:1.00px;height:508.50px;background:#dedede;"></div>
<div class="b" style="left:947.5px;top:257.5px;width:1.00px;height:508.50px;background:#dedede;"></div>
<div class="b" style="left:993.0px;top:257.5px;width:1.00px;height:508.50px;background:#dedede;"></div>
<div class="b" style="left:1042.2px;top:257.5px;width:1.00px;height:508.50px;background:#dedede;"></div>
<div class="b" style="left:1087.9px;top:257.5px;width:1.00px;height:508.50px;background:#dedede;"></div>
<div class="b" style="left:1133.2px;top:257.5px;width:1.00px;height:508.50px;background:#dedede;"></div>
<div class="b" style="left:1178.5px;top:257.5px;width:1.00px;height:508.50px;background:#dedede;"></div>
<div class="b" style="left:1223.8px;top:257.5px;width:1.00px;height:508.50px;background:#dedede;"></div>
<div class="b" style="left:1269.1px;top:257.5px;width:1.00px;height:508.50px;background:#dedede;"></div>
<div class="b" style="left:1314.4px;top:257.5px;width:1.00px;height:508.50px;background:#dedede;"></div>
<div class="b" style="left:1359.7px;top:257.5px;width:1.00px;height:508.50px;background:#dedede;"></div>
<div class="b" style="left:1405.0px;top:257.5px;width:1.00px;height:508.50px;background:#dedede;"></div>
<div class="b" style="left:1450.3px;top:257.5px;width:1.00px;height:508.50px;background:#dedede;"></div>
<div class="b" style="left:20px;top:280.5px;width:1463.00px;height:1.00px;background:#dedede;"></div>
<div class="b" style="left:20px;top:294.59px;width:1463.00px;height:1.00px;background:#dedede;"></div>
<div class="b" style="left:20px;top:308.68px;width:1463.00px;height:1.00px;background:#dedede;"></div>
<div class="b" style="left:20px;top:322.77px;width:1463.00px;height:1.00px;background:#dedede;"></div>
<div class="b" style="left:20px;top:336.86px;width:1463.00px;height:1.00px;background:#dedede;"></div>
<div class="b" style="left:20px;top:350.95px;width:1463.00px;height:1.00px;background:#dedede;"></div>
<div class="b" style="left:20px;top:365.04px;width:1463.00px;height:1.00px;background:#dedede;"></div>
<div class="b" style="left:20px;top:379.13px;width:1463.00px;height:1.00px;background:#dedede;"></div>
<div class="b" style="left:20px;top:393.22px;width:1463.00px;height:1.00px;background:#dedede;"></div>
<div class="b" style="left:20px;top:407.31px;width:1463.00px;height:1.00px;background:#dedede;"></div>
<div class="b" style="left:20px;top:421.4px;width:1463.00px;height:1.00px;background:#dedede;"></div>
<div class="b" style="left:20px;top:435.49px;width:1463.00px;height:1.00px;background:#dedede;"></div>
<div class="b" style="left:20px;top:449.58px;width:1463.00px;height:1.00px;background:#dedede;"></div>
<div class="b" style="left:20px;top:463.67px;width:1463.00px;height:1.00px;background:#dedede;"></div>
<div class="b" style="left:20px;top:477.76px;width:1463.00px;height:1.00px;background:#dedede;"></div>
<div class="b" style="left:20px;top:491.85px;width:1463.00px;height:1.00px;background:#dedede;"></div>
<div class="b" style="left:20px;top:505.94px;width:1463.00px;height:1.00px;background:#dedede;"></div>
<div class="b" style="left:20px;top:520.03px;width:1463.00px;height:1.00px;background:#dedede;"></div>
<div class="b" style="left:20px;top:534.12px;width:1463.00px;height:1.00px;background:#dedede;"></div>
<div class="b" style="left:20px;top:548.21px;width:1463.00px;height:1.00px;background:#dedede;"></div>
<div class="b" style="left:20px;top:562.3px;width:1463.00px;height:1.00px;background:#dedede;"></div>
<div class="b" style="left:20px;top:576.39px;width:1463.00px;height:1.00px;background:#dedede;"></div>
<div class="b" style="left:20px;top:590.48px;width:1463.00px;height:1.00px;background:#dedede;"></div>
<div class="b" style="left:20px;top:604.57px;width:1463.00px;height:1.00px;background:#dedede;"></div>
<div class="b" style="left:20px;top:618.66px;width:1463.00px;height:1.00px;background:#dedede;"></div>
<div class="b" style="left:20px;top:632.75px;width:1463.00px;height:1.00px;background:#dedede;"></div>
<div class="b" style="left:20px;top:646.84px;width:1463.00px;height:1.00px;background:#dedede;"></div>
<div class="b" style="left:20px;top:660.93px;width:1463.00px;height:1.00px;background:#dedede;"></div>
<div class="b" style="left:20px;top:675.02px;width:1463.00px;height:1.00px;background:#dedede;"></div>
<div class="b" style="left:20px;top:689.11px;width:1463.00px;height:1.00px;background:#dedede;"></div>
<div class="b" style="left:20px;top:703.2px;width:1463.00px;height:1.00px;background:#dedede;"></div>
<div class="b" style="left:20px;top:717.29px;width:1463.00px;height:1.00px;background:#dedede;"></div>
<div class="b" style="left:20px;top:731.38px;width:1463.00px;height:1.00px;background:#dedede;"></div>
<div class="b" style="left:20px;top:745.47px;width:1463.00px;height:1.00px;background:#dedede;"></div>
<div class="b" style="left:20px;top:759.56px;width:1463.00px;height:1.00px;background:#dedede;"></div>
<div class="b" style="left:20px;top:195.5px;width:1463.00px;height:62.00px;background:#262626;"></div>
<span class="t" style="left:44.0px;top:213.0px;font-size:38px;line-height:49px;color:#fff;font-family:'Liberation Serif',serif;transform:scaleX(0.9637);-webkit-text-stroke:0.5px #fff;">Number of Rocket Launches</span>
<div class="b" style="left:37px;top:183px;width:208.00px;height:12.50px;background:#d2d2d2;"></div>
<div class="b" style="left:37px;top:193.3px;width:208.00px;height:1.90px;background:#86c3a2;"></div>
<span class="t" style="left:25.4px;top:181.8px;font-size:10px;line-height:13px;color:#444;font-family:'Liberation Sans',sans-serif;transform:scaleX(0.9200);">A</span>
<span class="t" style="left:75.9px;top:181.8px;font-size:10px;line-height:13px;color:#2f6b4a;font-family:'Liberation Sans',sans-serif;transform:scaleX(0.9200);">B</span>
<div class="b" style="left:36.5px;top:183px;width:1.00px;height:12.50px;background:#c4c4c4;"></div>
<span class="t" style="left:179.7px;top:181.8px;font-size:10px;line-height:13px;color:#2f6b4a;font-family:'Liberation Sans',sans-serif;transform:scaleX(0.9200);">C</span>
<span class="t" style="left:253.2px;top:181.8px;font-size:10px;line-height:13px;color:#444;font-family:'Liberation Sans',sans-serif;transform:scaleX(0.9200);">D</span>
<div class="b" style="left:244.5px;top:183px;width:1.00px;height:12.50px;background:#c4c4c4;"></div>
<span class="t" style="left:287.6px;top:181.8px;font-size:10px;line-height:13px;color:#444;font-family:'Liberation Sans',sans-serif;transform:scaleX(0.9200);">E</span>
<div class="b" style="left:267.5px;top:183px;width:1.00px;height:12.50px;background:#c4c4c4;"></div>
<span class="t" style="left:333.2px;top:181.8px;font-size:10px;line-height:13px;color:#444;font-family:'Liberation Sans',sans-serif;transform:scaleX(0.9200);">F</span>
<div class="b" style="left:312.8px;top:183px;width:1.00px;height:12.50px;background:#c4c4c4;"></div>
<span class="t" style="left:377.8px;top:181.8px;font-size:10px;line-height:13px;color:#444;font-family:'Liberation Sans',sans-serif;transform:scaleX(0.9200);">G</span>
<div class="b" style="left:358.2px;top:183px;width:1.00px;height:12.50px;background:#c4c4c4;"></div>
<span class="t" style="left:423.3px;top:181.8px;font-size:10px;line-height:13px;color:#444;font-family:'Liberation Sans',sans-serif;transform:scaleX(0.9200);">H</span>
<div class="b" style="left:403.5px;top:183px;width:1.00px;height:12.50px;background:#c4c4c4;"></div>
<span class="t" style="left:470.7px;top:181.8px;font-size:10px;line-height:13px;color:#444;font-family:'Liberation Sans',sans-serif;transform:scaleX(0.9200);">I</span>
<div class="b" style="left:448.8px;top:183px;width:1.00px;height:12.50px;background:#c4c4c4;"></div>
<span class="t" style="left:515.0px;top:181.8px;font-size:10px;line-height:13px;color:#444;font-family:'Liberation Sans',sans-serif;transform:scaleX(0.9200);">J</span>
<div class="b" style="left:494.1px;top:183px;width:1.00px;height:12.50px;background:#c4c4c4;"></div>
<span class="t" style="left:559.6px;top:181.8px;font-size:10px;line-height:13px;color:#444;font-family:'Liberation Sans',sans-serif;transform:scaleX(0.9200);">K</span>
<div class="b" style="left:539.5px;top:183px;width:1.00px;height:12.50px;background:#c4c4c4;"></div>
<span class="t" style="left:605.4px;top:181.8px;font-size:10px;line-height:13px;color:#444;font-family:'Liberation Sans',sans-serif;transform:scaleX(0.9200);">L</span>
<div class="b" style="left:584.8px;top:183px;width:1.00px;height:12.50px;background:#c4c4c4;"></div>
<span class="t" style="left:649.5px;top:181.8px;font-size:10px;line-height:13px;color:#444;font-family:'Liberation Sans',sans-serif;transform:scaleX(0.9200);">M</span>
<div class="b" style="left:630.1px;top:183px;width:1.00px;height:12.50px;background:#c4c4c4;"></div>
<span class="t" style="left:695.3px;top:181.8px;font-size:10px;line-height:13px;color:#444;font-family:'Liberation Sans',sans-serif;transform:scaleX(0.9200);">N</span>
<div class="b" style="left:675.5px;top:183px;width:1.00px;height:12.50px;background:#c4c4c4;"></div>
<span class="t" style="left:740.4px;top:181.8px;font-size:10px;line-height:13px;color:#444;font-family:'Liberation Sans',sans-serif;transform:scaleX(0.9200);">O</span>
<div class="b" style="left:720.8px;top:183px;width:1.00px;height:12.50px;background:#c4c4c4;"></div>
<span class="t" style="left:786.2px;top:181.8px;font-size:10px;line-height:13px;color:#444;font-family:'Liberation Sans',sans-serif;transform:scaleX(0.9200);">P</span>
<div class="b" style="left:766.1px;top:183px;width:1.00px;height:12.50px;background:#c4c4c4;"></div>
<span class="t" style="left:831.1px;top:181.8px;font-size:10px;line-height:13px;color:#444;font-family:'Liberation Sans',sans-serif;transform:scaleX(0.9200);">Q</span>
<div class="b" style="left:811.5px;top:183px;width:1.00px;height:12.50px;background:#c4c4c4;"></div>
<span class="t" style="left:876.6px;top:181.8px;font-size:10px;line-height:13px;color:#444;font-family:'Liberation Sans',sans-serif;transform:scaleX(0.9200);">R</span>
<div class="b" style="left:856.8px;top:183px;width:1.00px;height:12.50px;background:#c4c4c4;"></div>
<span class="t" style="left:922.2px;top:181.8px;font-size:10px;line-height:13px;color:#444;font-family:'Liberation Sans',sans-serif;transform:scaleX(0.9200);">S</span>
<div class="b" style="left:902.1px;top:183px;width:1.00px;height:12.50px;background:#c4c4c4;"></div>
<span class="t" style="left:967.9px;top:181.8px;font-size:10px;line-height:13px;color:#444;font-family:'Liberation Sans',sans-serif;transform:scaleX(0.9200);">T</span>
<div class="b" style="left:947.5px;top:183px;width:1.00px;height:12.50px;background:#c4c4c4;"></div>
<span class="t" style="left:1014.8px;top:181.8px;font-size:10px;line-height:13px;color:#444;font-family:'Liberation Sans',sans-serif;transform:scaleX(0.9200);">U</span>
<div class="b" style="left:993.0px;top:183px;width:1.00px;height:12.50px;background:#c4c4c4;"></div>
<span class="t" style="left:1062.5px;top:181.8px;font-size:10px;line-height:13px;color:#444;font-family:'Liberation Sans',sans-serif;transform:scaleX(0.9200);">V</span>
<div class="b" style="left:1042.2px;top:183px;width:1.00px;height:12.50px;background:#c4c4c4;"></div>
<span class="t" style="left:1106.7px;top:181.8px;font-size:10px;line-height:13px;color:#444;font-family:'Liberation Sans',sans-serif;transform:scaleX(0.9200);">W</span>
<div class="b" style="left:1087.9px;top:183px;width:1.00px;height:12.50px;background:#c4c4c4;"></div>
<span class="t" style="left:1153.3px;top:181.8px;font-size:10px;line-height:13px;color:#444;font-family:'Liberation Sans',sans-serif;transform:scaleX(0.9200);">X</span>
<div class="b" style="left:1133.2px;top:183px;width:1.00px;height:12.50px;background:#c4c4c4;"></div>
<span class="t" style="left:1198.6px;top:181.8px;font-size:10px;line-height:13px;color:#444;font-family:'Liberation Sans',sans-serif;transform:scaleX(0.9200);">Y</span>
<div class="b" style="left:1178.5px;top:183px;width:1.00px;height:12.50px;background:#c4c4c4;"></div>
<span class="t" style="left:1244.1px;top:181.8px;font-size:10px;line-height:13px;color:#444;font-family:'Liberation Sans',sans-serif;transform:scaleX(0.9200);">Z</span>
<div class="b" style="left:1223.8px;top:183px;width:1.00px;height:12.50px;background:#c4c4c4;"></div>
<span class="t" style="left:1286.1px;top:181.8px;font-size:10px;line-height:13px;color:#444;font-family:'Liberation Sans',sans-serif;transform:scaleX(0.9200);">AA</span>
<div class="b" style="left:1269.1px;top:183px;width:1.00px;height:12.50px;background:#c4c4c4;"></div>
<span class="t" style="left:1331.4px;top:181.8px;font-size:10px;line-height:13px;color:#444;font-family:'Liberation Sans',sans-serif;transform:scaleX(0.9200);">AB</span>
<div class="b" style="left:1314.4px;top:183px;width:1.00px;height:12.50px;background:#c4c4c4;"></div>
<span class="t" style="left:1376.5px;top:181.8px;font-size:10px;line-height:13px;color:#444;font-family:'Liberation Sans',sans-serif;transform:scaleX(0.9200);">AC</span>
<div class="b" style="left:1359.7px;top:183px;width:1.00px;height:12.50px;background:#c4c4c4;"></div>
<span class="t" style="left:1421.8px;top:181.8px;font-size:10px;line-height:13px;color:#444;font-family:'Liberation Sans',sans-serif;transform:scaleX(0.9200);">AD</span>
<div class="b" style="left:1405.0px;top:183px;width:1.00px;height:12.50px;background:#c4c4c4;"></div>
<span class="t" style="left:1467.9px;top:181.8px;font-size:10px;line-height:13px;color:#444;font-family:'Liberation Sans',sans-serif;transform:scaleX(0.9200);">AE</span>
<div class="b" style="left:1450.3px;top:183px;width:1.00px;height:12.50px;background:#c4c4c4;"></div>
<div class="b" style="left:120.5px;top:183px;width:1.00px;height:11.00px;background:#bdbdbd;"></div>
<svg class="b" style="left:5px;top:183px;" width="13" height="12" viewBox="0 0 13 12"><path d="M11.500 1.500v9.500H1.500z" fill="#b8b8b8"/></svg>
<div class="b" style="left:0px;top:196px;width:20.00px;height:570.00px;background:#e6e6e6;"></div>
<div class="b" style="left:19.5px;top:196px;width:1.00px;height:570.00px;background:#c4c4c4;"></div>
<div class="b" style="left:0px;top:281px;width:20.00px;height:253.62px;background:#d2d2d2;"></div>
<div class="b" style="left:18.5px;top:281px;width:1.50px;height:253.62px;background:#217346;"></div>
<span class="t" style="left:7.5px;top:241.0px;font-size:10px;line-height:13px;color:#444;font-family:'Liberation Sans',sans-serif;transform:scaleX(0.9000);">1</span>
<span class="t" style="left:7.5px;top:263.0px;font-size:10px;line-height:13px;color:#444;font-family:'Liberation Sans',sans-serif;transform:scaleX(0.9000);">2</span>
<div class="b" style="left:0px;top:257.0px;width:20.00px;height:1.00px;background:#cfcfcf;"></div>
<span class="t" style="left:7.5px;top:281.8px;font-size:10px;line-height:13px;color:#217346;font-family:'Liberation Sans',sans-serif;transform:scaleX(0.9000);">3</span>
<div class="b" style="left:0px;top:280.5px;width:20.00px;height:1.00px;background:#cfcfcf;"></div>
<span class="t" style="left:7.5px;top:295.9px;font-size:10px;line-height:13px;color:#217346;font-family:'Liberation Sans',sans-serif;transform:scaleX(0.9000);">4</span>
<div class="b" style="left:0px;top:294.59px;width:20.00px;height:1.00px;background:#cfcfcf;"></div>
<span class="t" style="left:7.5px;top:310.0px;font-size:10px;line-height:13px;color:#217346;font-family:'Liberation Sans',sans-serif;transform:scaleX(0.9000);">5</span>
<div class="b" style="left:0px;top:308.68px;width:20.00px;height:1.00px;background:#cfcfcf;"></div>
<span class="t" style="left:7.5px;top:324.1px;font-size:10px;line-height:13px;color:#217346;font-family:'Liberation Sans',sans-serif;transform:scaleX(0.9000);">6</span>
<div class="b" style="left:0px;top:322.77px;width:20.00px;height:1.00px;background:#cfcfcf;"></div>
<span class="t" style="left:7.5px;top:338.2px;font-size:10px;line-height:13px;color:#217346;font-family:'Liberation Sans',sans-serif;transform:scaleX(0.9000);">7</span>
<div class="b" style="left:0px;top:336.86px;width:20.00px;height:1.00px;background:#cfcfcf;"></div>
<span class="t" style="left:7.5px;top:352.3px;font-size:10px;line-height:13px;color:#217346;font-family:'Liberation Sans',sans-serif;transform:scaleX(0.9000);">8</span>
<div class="b" style="left:0px;top:350.95px;width:20.00px;height:1.00px;background:#cfcfcf;"></div>
<span class="t" style="left:7.5px;top:366.4px;font-size:10px;line-height:13px;color:#217346;font-family:'Liberation Sans',sans-serif;transform:scaleX(0.9000);">9</span>
<div class="b" style="left:0px;top:365.04px;width:20.00px;height:1.00px;background:#cfcfcf;"></div>
<span class="t" style="left:5.0px;top:380.5px;font-size:10px;line-height:13px;color:#217346;font-family:'Liberation Sans',sans-serif;transform:scaleX(0.9000);">10</span>
<div class="b" style="left:0px;top:379.13px;width:20.00px;height:1.00px;background:#cfcfcf;"></div>
<span class="t" style="left:5.3px;top:394.6px;font-size:10px;line-height:13px;color:#217346;font-family:'Liberation Sans',sans-serif;transform:scaleX(0.9000);">11</span>
<div class="b" style="left:0px;top:393.22px;width:20.00px;height:1.00px;background:#cfcfcf;"></div>
<span class="t" style="left:5.0px;top:408.7px;font-size:10px;line-height:13px;color:#217346;font-family:'Liberation Sans',sans-serif;transform:scaleX(0.9000);">12</span>
<div class="b" style="left:0px;top:407.31px;width:20.00px;height:1.00px;background:#cfcfcf;"></div>
<span class="t" style="left:5.0px;top:422.7px;font-size:10px;line-height:13px;color:#217346;font-family:'Liberation Sans',sans-serif;transform:scaleX(0.9000);">13</span>
<div class="b" style="left:0px;top:421.4px;width:20.00px;height:1.00px;background:#cfcfcf;"></div>
<span class="t" style="left:5.0px;top:436.8px;font-size:10px;line-height:13px;color:#217346;font-family:'Liberation Sans',sans-serif;transform:scaleX(0.9000);">14</span>
<div class="b" style="left:0px;top:435.49px;width:20.00px;height:1.00px;background:#cfcfcf;"></div>
<span class="t" style="left:5.0px;top:450.9px;font-size:10px;line-height:13px;color:#217346;font-family:'Liberation Sans',sans-serif;transform:scaleX(0.9000);">15</span>
<div class="b" style="left:0px;top:449.58px;width:20.00px;height:1.00px;background:#cfcfcf;"></div>
<span class="t" style="left:5.0px;top:465.0px;font-size:10px;line-height:13px;color:#217346;font-family:'Liberation Sans',sans-serif;transform:scaleX(0.9000);">16</span>
<div class="b" style="left:0px;top:463.67px;width:20.00px;height:1.00px;background:#cfcfcf;"></div>
<span class="t" style="left:5.0px;top:479.1px;font-size:10px;line-height:13px;color:#217346;font-family:'Liberation Sans',sans-serif;transform:scaleX(0.9000);">17</span>
<div class="b" style="left:0px;top:477.76px;width:20.00px;height:1.00px;background:#cfcfcf;"></div>
<span class="t" style="left:5.0px;top:493.2px;font-size:10px;line-height:13px;color:#217346;font-family:'Liberation Sans',sans-serif;transform:scaleX(0.9000);">18</span>
<div class="b" style="left:0px;top:491.85px;width:20.00px;height:1.00px;background:#cfcfcf;"></div>
<span class="t" style="left:5.0px;top:507.3px;font-size:10px;line-height:13px;color:#217346;font-family:'Liberation Sans',sans-serif;transform:scaleX(0.9000);">19</span>
<div class="b" style="left:0px;top:505.94px;width:20.00px;height:1.00px;background:#cfcfcf;"></div>
<span class="t" style="left:5.0px;top:521.4px;font-size:10px;line-height:13px;color:#217346;font-family:'Liberation Sans',sans-serif;transform:scaleX(0.9000);">20</span>
<div class="b" style="left:0px;top:520.03px;width:20.00px;height:1.00px;background:#cfcfcf;"></div>
<span class="t" style="left:5.0px;top:535.5px;font-size:10px;line-height:13px;color:#444;font-family:'Liberation Sans',sans-serif;transform:scaleX(0.9000);">21</span>
<div class="b" style="left:0px;top:534.12px;width:20.00px;height:1.00px;background:#cfcfcf;"></div>
<span class="t" style="left:5.0px;top:549.6px;font-size:10px;line-height:13px;color:#444;font-family:'Liberation Sans',sans-serif;transform:scaleX(0.9000);">22</span>
<div class="b" style="left:0px;top:548.21px;width:20.00px;height:1.00px;background:#cfcfcf;"></div>
<span class="t" style="left:5.0px;top:563.6px;font-size:10px;line-height:13px;color:#444;font-family:'Liberation Sans',sans-serif;transform:scaleX(0.9000);">23</span>
<div class="b" style="left:0px;top:562.3px;width:20.00px;height:1.00px;background:#cfcfcf;"></div>
<span class="t" style="left:5.0px;top:577.7px;font-size:10px;line-height:13px;color:#444;font-family:'Liberation Sans',sans-serif;transform:scaleX(0.9000);">24</span>
<div class="b" style="left:0px;top:576.39px;width:20.00px;height:1.00px;background:#cfcfcf;"></div>
<span class="t" style="left:5.0px;top:591.8px;font-size:10px;line-height:13px;color:#444;font-family:'Liberation Sans',sans-serif;transform:scaleX(0.9000);">25</span>
<div class="b" style="left:0px;top:590.48px;width:20.00px;height:1.00px;background:#cfcfcf;"></div>
<span class="t" style="left:5.0px;top:605.9px;font-size:10px;line-height:13px;color:#444;font-family:'Liberation Sans',sans-serif;transform:scaleX(0.9000);">26</span>
<div class="b" style="left:0px;top:604.57px;width:20.00px;height:1.00px;background:#cfcfcf;"></div>
<span class="t" style="left:5.0px;top:620.0px;font-size:10px;line-height:13px;color:#444;font-family:'Liberation Sans',sans-serif;transform:scaleX(0.9000);">27</span>
<div class="b" style="left:0px;top:618.66px;width:20.00px;height:1.00px;background:#cfcfcf;"></div>
<span class="t" style="left:5.0px;top:634.1px;font-size:10px;line-height:13px;color:#444;font-family:'Liberation Sans',sans-serif;transform:scaleX(0.9000);">28</span>
<div class="b" style="left:0px;top:632.75px;width:20.00px;height:1.00px;background:#cfcfcf;"></div>
<span class="t" style="left:5.0px;top:648.2px;font-size:10px;line-height:13px;color:#444;font-family:'Liberation Sans',sans-serif;transform:scaleX(0.9000);">29</span>
<div class="b" style="left:0px;top:646.84px;width:20.00px;height:1.00px;background:#cfcfcf;"></div>
<span class="t" style="left:5.0px;top:662.3px;font-size:10px;line-height:13px;color:#444;font-family:'Liberation Sans',sans-serif;transform:scaleX(0.9000);">30</span>
<div class="b" style="left:0px;top:660.93px;width:20.00px;height:1.00px;background:#cfcfcf;"></div>
<span class="t" style="left:5.0px;top:676.4px;font-size:10px;line-height:13px;color:#444;font-family:'Liberation Sans',sans-serif;transform:scaleX(0.9000);">31</span>
<div class="b" style="left:0px;top:675.02px;width:20.00px;height:1.00px;background:#cfcfcf;"></div>
<span class="t" style="left:5.0px;top:690.5px;font-size:10px;line-height:13px;color:#444;font-family:'Liberation Sans',sans-serif;transform:scaleX(0.9000);">32</span>
<div class="b" style="left:0px;top:689.11px;width:20.00px;height:1.00px;background:#cfcfcf;"></div>
<span class="t" style="left:5.0px;top:704.5px;font-size:10px;line-height:13px;color:#444;font-family:'Liberation Sans',sans-serif;transform:scaleX(0.9000);">33</span>
<div class="b" style="left:0px;top:703.2px;width:20.00px;height:1.00px;background:#cfcfcf;"></div>
<span class="t" style="left:5.0px;top:718.6px;font-size:10px;line-height:13px;color:#444;font-family:'Liberation Sans',sans-serif;transform:scaleX(0.9000);">34</span>
<div class="b" style="left:0px;top:717.29px;width:20.00px;height:1.00px;background:#cfcfcf;"></div>
<span class="t" style="left:5.0px;top:732.7px;font-size:10px;line-height:13px;color:#444;font-family:'Liberation Sans',sans-serif;transform:scaleX(0.9000);">35</span>
<div class="b" style="left:0px;top:731.38px;width:20.00px;height:1.00px;background:#cfcfcf;"></div>
<span class="t" style="left:5.0px;top:746.8px;font-size:10px;line-height:13px;color:#444;font-family:'Liberation Sans',sans-serif;transform:scaleX(0.9000);">36</span>
<div class="b" style="left:0px;top:745.47px;width:20.00px;height:1.00px;background:#cfcfcf;"></div>
<span class="t" style="left:5.0px;top:760.9px;font-size:10px;line-height:13px;color:#444;font-family:'Liberation Sans',sans-serif;transform:scaleX(0.9000);clip-path:inset(0 0 8px 0);">37</span>
<div class="b" style="left:0px;top:759.56px;width:20.00px;height:1.00px;background:#cfcfcf;"></div>
<div class="b" style="left:37px;top:281px;width:208.50px;height:253.62px;background:#c8c8c8;"></div>
<div class="b" style="left:38px;top:282px;width:82.50px;height:12.59px;background:#fff;"></div>
<div class="b" style="left:38px;top:295px;width:207.00px;height:1.00px;background:#555;"></div>
<div class="b" style="left:38px;top:309px;width:207.00px;height:1.00px;background:#555;"></div>
<div class="b" style="left:38px;top:323px;width:207.00px;height:1.00px;background:#555;"></div>
<div class="b" style="left:38px;top:337px;width:207.00px;height:1.00px;background:#555;"></div>
<div class="b" style="left:38px;top:351px;width:207.00px;height:1.00px;background:#555;"></div>
<div class="b" style="left:38px;top:365px;width:207.00px;height:1.00px;background:#555;"></div>
<div class="b" style="left:38px;top:379px;width:207.00px;height:1.00px;background:#555;"></div>
<div class="b" style="left:38px;top:393px;width:207.00px;height:1.00px;background:#555;"></div>
<div class="b" style="left:38px;top:407px;width:207.00px;height:1.00px;background:#555;"></div>
<div class="b" style="left:38px;top:421px;width:207.00px;height:1.00px;background:#555;"></div>
<div class="b" style="left:38px;top:435px;width:207.00px;height:1.00px;background:#555;"></div>
<div class="b" style="left:38px;top:450px;width:207.00px;height:1.00px;background:#555;"></div>
<div class="b" style="left:38px;top:464px;width:207.00px;height:1.00px;background:#555;"></div>
<div class="b" style="left:38px;top:478px;width:207.00px;height:1.00px;background:#555;"></div>
<div class="b" style="left:38px;top:492px;width:207.00px;height:1.00px;background:#555;"></div>
<div class="b" style="left:38px;top:506px;width:207.00px;height:1.00px;background:#555;"></div>
<div class="b" style="left:38px;top:520px;width:207.00px;height:1.00px;background:#555;"></div>
<div class="b" style="left:120.5px;top:295.09px;width:1.00px;height:239.53px;background:#555;"></div>
<div class="b" style="left:36.5px;top:280.5px;width:209.50px;height:254.92px;border:1.500px solid #3b6b50;box-sizing:border-box;"></div>
<div class="b" style="left:243.5px;top:533.12px;width:4.50px;height:4.50px;background:#3b6b50;border:1px solid #fff;box-sizing:border-box;"></div>
<span class="t" style="left:40.5px;top:280.5px;font-size:12px;line-height:16px;color:#222;font-family:'Liberation Serif',serif;transform:scaleX(1.0961);font-weight:700;">Country</span>
<span class="t" style="left:124.0px;top:280.5px;font-size:12px;line-height:16px;color:#222;font-family:'Liberation Serif',serif;transform:scaleX(1.0929);font-weight:700;">Number of Launches</span>
<span class="t" style="left:40.0px;top:294.4px;font-size:12px;line-height:16px;color:#222;font-family:'Liberation Serif',serif;transform:scaleX(0.9903);">United States</span>
<span class="t" style="left:229.5px;top:295.4px;font-size:12px;line-height:16px;color:#222;font-family:'Liberation Serif',serif;transform:scaleX(1.0417);">85</span>
<span class="t" style="left:40.0px;top:308.5px;font-size:12px;line-height:16px;color:#222;font-family:'Liberation Serif',serif;transform:scaleX(1.0261);">France</span>
<span class="t" style="left:229.5px;top:309.5px;font-size:12px;line-height:16px;color:#222;font-family:'Liberation Serif',serif;transform:scaleX(1.0417);">34</span>
<span class="t" style="left:40.0px;top:322.6px;font-size:12px;line-height:16px;color:#222;font-family:'Liberation Serif',serif;transform:scaleX(1.0083);">Portugal</span>
<span class="t" style="left:229.5px;top:323.6px;font-size:12px;line-height:16px;color:#222;font-family:'Liberation Serif',serif;transform:scaleX(1.0417);">26</span>
<span class="t" style="left:40.0px;top:336.7px;font-size:12px;line-height:16px;color:#222;font-family:'Liberation Serif',serif;transform:scaleX(0.9512);">Spain</span>
<span class="t" style="left:229.5px;top:337.7px;font-size:12px;line-height:16px;color:#222;font-family:'Liberation Serif',serif;transform:scaleX(1.0417);">19</span>
<span class="t" style="left:40.0px;top:350.8px;font-size:12px;line-height:16px;color:#222;font-family:'Liberation Serif',serif;transform:scaleX(0.9692);">United Kingdom</span>
<span class="t" style="left:229.5px;top:351.8px;font-size:12px;line-height:16px;color:#222;font-family:'Liberation Serif',serif;transform:scaleX(1.0417);">64</span>
<span class="t" style="left:40.0px;top:364.9px;font-size:12px;line-height:16px;color:#222;font-family:'Liberation Serif',serif;transform:scaleX(0.9838);">South Africa</span>
<span class="t" style="left:229.5px;top:365.9px;font-size:12px;line-height:16px;color:#222;font-family:'Liberation Serif',serif;transform:scaleX(1.0417);">44</span>
<span class="t" style="left:40.0px;top:379.0px;font-size:12px;line-height:16px;color:#222;font-family:'Liberation Serif',serif;transform:scaleX(0.9379);">Brazil</span>
<span class="t" style="left:229.5px;top:380.0px;font-size:12px;line-height:16px;color:#222;font-family:'Liberation Serif',serif;transform:scaleX(1.0417);">39</span>
<span class="t" style="left:40.0px;top:393.1px;font-size:12px;line-height:16px;color:#222;font-family:'Liberation Serif',serif;transform:scaleX(0.9424);">Chile</span>
<span class="t" style="left:229.5px;top:394.1px;font-size:12px;line-height:16px;color:#222;font-family:'Liberation Serif',serif;transform:scaleX(1.0417);">61</span>
<span class="t" style="left:40.0px;top:407.2px;font-size:12px;line-height:16px;color:#222;font-family:'Liberation Serif',serif;transform:scaleX(0.9855);">Germany</span>
<span class="t" style="left:229.5px;top:408.2px;font-size:12px;line-height:16px;color:#222;font-family:'Liberation Serif',serif;transform:scaleX(1.0417);">59</span>
<span class="t" style="left:40.0px;top:421.2px;font-size:12px;line-height:16px;color:#222;font-family:'Liberation Serif',serif;transform:scaleX(0.9954);">Finland</span>
<span class="t" style="left:229.5px;top:422.2px;font-size:12px;line-height:16px;color:#222;font-family:'Liberation Serif',serif;transform:scaleX(1.0417);">21</span>
<span class="t" style="left:40.0px;top:435.3px;font-size:12px;line-height:16px;color:#222;font-family:'Liberation Serif',serif;transform:scaleX(0.9701);">Norway</span>
<span class="t" style="left:229.5px;top:436.3px;font-size:12px;line-height:16px;color:#222;font-family:'Liberation Serif',serif;transform:scaleX(1.0417);">20</span>
<span class="t" style="left:40.0px;top:449.4px;font-size:12px;line-height:16px;color:#222;font-family:'Liberation Serif',serif;transform:scaleX(0.9607);">Sweden</span>
<span class="t" style="left:229.5px;top:450.4px;font-size:12px;line-height:16px;color:#222;font-family:'Liberation Serif',serif;transform:scaleX(1.0417);">33</span>
<span class="t" style="left:40.0px;top:463.5px;font-size:12px;line-height:16px;color:#222;font-family:'Liberation Serif',serif;transform:scaleX(0.9594);">China</span>
<span class="t" style="left:229.5px;top:464.5px;font-size:12px;line-height:16px;color:#222;font-family:'Liberation Serif',serif;transform:scaleX(1.0417);">70</span>
<span class="t" style="left:40.0px;top:477.6px;font-size:12px;line-height:16px;color:#222;font-family:'Liberation Serif',serif;transform:scaleX(1.0431);">Japan</span>
<span class="t" style="left:229.5px;top:478.6px;font-size:12px;line-height:16px;color:#222;font-family:'Liberation Serif',serif;transform:scaleX(1.0417);">62</span>
<span class="t" style="left:40.0px;top:491.7px;font-size:12px;line-height:16px;color:#222;font-family:'Liberation Serif',serif;transform:scaleX(0.9848);">Thailand</span>
<span class="t" style="left:229.5px;top:492.7px;font-size:12px;line-height:16px;color:#222;font-family:'Liberation Serif',serif;transform:scaleX(1.0417);">13</span>
<span class="t" style="left:40.0px;top:505.8px;font-size:12px;line-height:16px;color:#222;font-family:'Liberation Serif',serif;transform:scaleX(0.9564);">New Zealand</span>
<span class="t" style="left:229.5px;top:506.8px;font-size:12px;line-height:16px;color:#222;font-family:'Liberation Serif',serif;transform:scaleX(1.0417);">32</span>
<span class="t" style="left:40.0px;top:519.9px;font-size:12px;line-height:16px;color:#222;font-family:'Liberation Serif',serif;transform:scaleX(1.0130);">Ecuador</span>
<span class="t" style="left:229.5px;top:520.9px;font-size:12px;line-height:16px;color:#222;font-family:'Liberation Serif',serif;transform:scaleX(1.0417);">16</span>
<div class="b" style="left:270px;top:591px;width:461.50px;height:175.00px;background:#fff;border:1px solid #d8d8d8;border-bottom:none;box-sizing:border-box;"></div>
<span class="t" style="left:276.5px;top:593.0px;font-size:18px;line-height:23px;color:#222;font-family:'Liberation Serif',serif;transform:scaleX(1.0213);">Apollo 11 was thefirst spaceflight that landed humans on</span>
<span class="t" style="left:276.5px;top:612.1px;font-size:18px;line-height:23px;color:#222;font-family:'Liberation Serif',serif;transform:scaleX(1.0220);">the Moon. Americans Neil Armstrong and Buzz</span>
<span class="t" style="left:276.5px;top:631.2px;font-size:18px;line-height:23px;color:#222;font-family:'Liberation Serif',serif;transform:scaleX(1.0175);">Aldrin landed on July 20, 1969, at 20:18 UTC (46 years</span>
<span class="t" style="left:276.5px;top:650.3px;font-size:18px;line-height:23px;color:#222;font-family:'Liberation Serif',serif;transform:scaleX(1.0005);">ago).</span>
<span class="t" style="left:276.5px;top:688.0px;font-size:11px;line-height:14px;color:#2a2a2a;font-family:'Liberation Serif',serif;transform:scaleX(1.0269);">Armstrong became the first to step onto the lunar surface six hours later on July 21 at 02:56 UTC.</span>
<span class="t" style="left:276.5px;top:699.8px;font-size:11px;line-height:14px;color:#2a2a2a;font-family:'Liberation Serif',serif;transform:scaleX(1.0364);">Armstrong spent about two and a half hours outside the spacecraft, and together with Aldrin</span>
<span class="t" style="left:276.5px;top:711.5px;font-size:11px;line-height:14px;color:#2a2a2a;font-family:'Liberation Serif',serif;transform:scaleX(1.0301);">collected 47.5 pounds (21.5 kg) of lunar material for return to Earth. The third member of the</span>
<span class="t" style="left:276.5px;top:723.2px;font-size:11px;line-height:14px;color:#2a2a2a;font-family:'Liberation Serif',serif;transform:scaleX(1.0288);">mission, Michael Collins, piloted the Command Spaceship alone in lunar orbit until Armstrong</span>
<span class="t" style="left:276.5px;top:735.0px;font-size:11px;line-height:14px;color:#2a2a2a;font-family:'Liberation Serif',serif;transform:scaleX(1.0405);">and Aldrin returned to it just under a day later for the trip back to Earth.</span>
<span class="t" style="left:276.5px;top:746.8px;font-size:11px;line-height:14px;color:#2a2a2a;font-family:'Liberation Serif',serif;transform:scaleX(1.0212);">Launched by a Saturn 5 rocket from Kennedy Space Center in Merit Island, Florida on July 16,</span>
<span class="t" style="left:276.5px;top:758.5px;font-size:11px;line-height:14px;color:#2a2a2a;font-family:'Liberation Serif',serif;transform:scaleX(1.0061);clip-path:inset(0 0 7.500px 0);">Apollo 11 was the fifth manned mission of NASA&#x27;s Apollo Program. The Apollo spacecraft had</span>
<div class="b" style="left:1483px;top:175px;width:17.00px;height:591.00px;background:#e6e6e6;"></div>
<div class="b" style="left:1485.5px;top:184px;width:10.50px;height:581.50px;background:#fff;border:1px solid #c8c8c8;box-sizing:border-box;"></div>
<div class="b" style="left:1486.5px;top:738px;width:8.50px;height:17.00px;background:#d0d0d0;"></div>
<div class="b" style="left:1485.5px;top:195px;width:10.50px;height:1.00px;background:#c8c8c8;"></div>
<div class="b" style="left:1485.5px;top:755px;width:10.50px;height:1.00px;background:#c8c8c8;"></div>
<svg class="b" style="left:1487.5px;top:187.5px;" width="7" height="5" viewBox="0 0 7 5"><path d="M0.500 4.200L3.500 1l3 3.200z" fill="#555"/></svg>
<svg class="b" style="left:1487.5px;top:758px;" width="7" height="5" viewBox="0 0 7 5"><path d="M0.500 0.800L3.500 4l3-3.200z" fill="#555"/></svg>
<svg class="b" style="left:268.5px;top:283px;" width="463.5" height="300" viewBox="0 0 463.5 300"><defs>
<linearGradient id="mg" x1="0.7" y1="0" x2="0.35" y2="1"><stop offset="0" stop-color="#bababa"/><stop offset="0.45" stop-color="#a6a6a6"/><stop offset="0.75" stop-color="#868686"/><stop offset="1" stop-color="#4a4a4a"/></linearGradient>
<filter id="mb" x="-5%" y="-5%" width="110%" height="110%"><feGaussianBlur stdDeviation="1.6"/></filter>
<filter id="mb1" x="0" y="0" width="463.5" height="300" filterUnits="userSpaceOnUse"><feTurbulence type="fractalNoise" baseFrequency="0.09" numOctaves="2" seed="9" result="t"/><feDisplacementMap in="SourceGraphic" in2="t" scale="11" xChannelSelector="R" yChannelSelector="G"/><feGaussianBlur stdDeviation="0.9"/></filter>
<filter id="mb3" x="-20%" y="-20%" width="140%" height="140%"><feGaussianBlur stdDeviation="3"/></filter>
<filter id="mb6" x="-30%" y="-30%" width="160%" height="160%"><feGaussianBlur stdDeviation="7"/></filter>
<filter id="mn1" x="0" y="0" width="100%" height="100%"><feTurbulence type="fractalNoise" baseFrequency="0.055" numOctaves="3" seed="7"/><feColorMatrix type="matrix" values="0 0 0 0 0  0 0 0 0 0  0 0 0 0 0  3.6 0 0 0 -2.15"/></filter>
<filter id="mn2" x="0" y="0" width="100%" height="100%"><feTurbulence type="fractalNoise" baseFrequency="0.11" numOctaves="3" seed="21"/><feColorMatrix type="matrix" values="0 0 0 0 1  0 0 0 0 1  0 0 0 0 1  0 2.6 0 0 -1.45"/></filter>
<filter id="mn4" x="0" y="0" width="100%" height="100%"><feTurbulence type="fractalNoise" baseFrequency="0.22" numOctaves="2" seed="13"/><feColorMatrix type="matrix" values="0 0 0 0 0  0 0 0 0 0  0 0 0 0 0  0 3.4 0 0 -1.75"/></filter>
<filter id="mn3" x="0" y="0" width="100%" height="100%"><feTurbulence type="fractalNoise" baseFrequency="0.035" numOctaves="2" seed="4"/><feColorMatrix type="matrix" values="0 0 0 0 0  0 0 0 0 0  0 0 0 0 0  0 0 4.5 0 -2.0"/></filter>
<linearGradient id="mmg" x1="0.6" y1="0" x2="0.4" y2="1"><stop offset="0" stop-color="#000"/><stop offset="0.4" stop-color="#111"/><stop offset="0.62" stop-color="#888"/><stop offset="0.85" stop-color="#fff"/></linearGradient><mask id="mm" maskUnits="userSpaceOnUse" x="0" y="0" width="463.5" height="300"><rect width="463.5" height="300" fill="url(#mmg)"/></mask>
<clipPath id="mc"><polygon points="121.5,1.0 201.5,0.0 353.5,0.0 371.5,5.0 392.5,22.0 400.5,33.0 391.5,51.0 383.5,69.0 372.5,92.0 363.5,117.0 359.5,147.0 361.5,182.0 349.5,205.0 337.5,222.0 331.5,257.0 329.5,295.0 271.5,297.0 215.5,289.0 176.5,274.0 149.5,255.0 130.5,233.0 120.5,187.0 115.5,137.0 114.5,77.0 114.5,37.0 116.5,13.0"/></clipPath>
<linearGradient id="md" x1="0.5" y1="0" x2="0.42" y2="1"><stop offset="0" stop-color="#000" stop-opacity="0"/><stop offset="0.5" stop-color="#000" stop-opacity="0"/><stop offset="0.78" stop-color="#000" stop-opacity="0.45"/><stop offset="1" stop-color="#000" stop-opacity="0.85"/></linearGradient>
</defs>
<rect width="463.5" height="300" fill="#000"/>
<polygon points="121.5,1.0 201.5,0.0 353.5,0.0 371.5,5.0 392.5,22.0 400.5,33.0 391.5,51.0 383.5,69.0 372.5,92.0 363.5,117.0 359.5,147.0 361.5,182.0 349.5,205.0 337.5,222.0 331.5,257.0 329.5,295.0 271.5,297.0 215.5,289.0 176.5,274.0 149.5,255.0 130.5,233.0 120.5,187.0 115.5,137.0 114.5,77.0 114.5,37.0 116.5,13.0" fill="url(#mg)" filter="url(#mb)"/>
<g clip-path="url(#mc)">
<rect width="463.5" height="300" filter="url(#mn1)"/>
<g mask="url(#mm)"><rect width="463.5" height="300" filter="url(#mn3)"/></g>
<rect width="463.5" height="300" filter="url(#mn2)" opacity="0.3"/>
<rect width="463.5" height="300" filter="url(#mn4)" opacity="0.38"/>
<g filter="url(#mb1)" fill="#000"><ellipse cx="203.9" cy="9.8" rx="7" ry="4.5" opacity="0.75"/><ellipse cx="200.7" cy="28.0" rx="4.5" ry="4.5" opacity="0.85"/><ellipse cx="246.5" cy="28.0" rx="8" ry="6" opacity="0.9"/><ellipse cx="277.5" cy="27.0" rx="2.5" ry="2.5" opacity="0.9"/><ellipse cx="259.5" cy="59.0" rx="30" ry="6" opacity="0.6"/><ellipse cx="181.5" cy="71.7" rx="3.5" ry="4" opacity="0.9"/><ellipse cx="208.2" cy="81.0" rx="5" ry="5" opacity="0.9"/><ellipse cx="221.0" cy="93.0" rx="10" ry="6" opacity="0.8"/><ellipse cx="302.0" cy="73.8" rx="4.5" ry="4.5" opacity="0.9"/><ellipse cx="325.5" cy="79.0" rx="3.5" ry="3.5" opacity="0.9"/><ellipse cx="307.5" cy="94.0" rx="12" ry="10" opacity="0.85"/><ellipse cx="257.5" cy="110.0" rx="11" ry="9" opacity="0.95"/><ellipse cx="221.0" cy="107.0" rx="5.5" ry="4" opacity="0.9"/><ellipse cx="165.5" cy="108.0" rx="8" ry="8" opacity="0.8"/><ellipse cx="331.9" cy="120.7" rx="12" ry="8" opacity="0.7"/><ellipse cx="312.5" cy="146.0" rx="9" ry="9" opacity="0.85"/><ellipse cx="139.9" cy="174.7" rx="4.5" ry="10" opacity="0.85"/><ellipse cx="163.5" cy="172.0" rx="13" ry="13" opacity="0.95"/><ellipse cx="191.1" cy="186.5" rx="5.5" ry="5.5" opacity="0.95"/><ellipse cx="202.5" cy="183.0" rx="3.5" ry="3.5" opacity="0.9"/><ellipse cx="180.5" cy="208.0" rx="8" ry="11" opacity="0.95"/><ellipse cx="199.5" cy="217.0" rx="12" ry="12" opacity="0.95"/><ellipse cx="218.5" cy="204.6" rx="6" ry="8" opacity="0.9"/><ellipse cx="246.5" cy="179.0" rx="6.5" ry="6.5" opacity="0.9"/><ellipse cx="270.0" cy="178.0" rx="9" ry="6" opacity="0.9"/><ellipse cx="297.5" cy="172.6" rx="13" ry="10" opacity="0.95"/><ellipse cx="314.5" cy="160.0" rx="8" ry="8" opacity="0.9"/><ellipse cx="293.5" cy="207.0" rx="5.5" ry="5.5" opacity="0.9"/><ellipse cx="315.5" cy="226.0" rx="20" ry="18" opacity="0.97"/><ellipse cx="227.5" cy="244.0" rx="9" ry="12" opacity="0.97"/><ellipse cx="255.1" cy="236.6" rx="8" ry="12" opacity="0.95"/><ellipse cx="289.5" cy="233.0" rx="10" ry="9" opacity="0.95"/><ellipse cx="203.9" cy="266.5" rx="11" ry="10" opacity="0.97"/><ellipse cx="271.5" cy="283.0" rx="45" ry="13" opacity="0.95"/><ellipse cx="186.5" cy="252.0" rx="10" ry="8" opacity="0.9"/><ellipse cx="156.5" cy="237.0" rx="10" ry="8" opacity="0.8"/><ellipse cx="151.5" cy="197.0" rx="5" ry="8" opacity="0.7"/><ellipse cx="131.5" cy="137.0" rx="3" ry="6" opacity="0.7"/><ellipse cx="127.5" cy="97.0" rx="2.5" ry="5" opacity="0.7"/><ellipse cx="136.5" cy="62.0" rx="3" ry="4" opacity="0.6"/><ellipse cx="146.5" cy="117.0" rx="4" ry="4" opacity="0.7"/><ellipse cx="126.5" cy="172.0" rx="3" ry="8" opacity="0.7"/><ellipse cx="341.5" cy="187.0" rx="8" ry="12" opacity="0.8"/><ellipse cx="276.5" cy="257.0" rx="8" ry="8" opacity="0.9"/><ellipse cx="331.5" cy="262.0" rx="10" ry="20" opacity="0.95"/><ellipse cx="371.5" cy="47.0" rx="4" ry="3" opacity="0.6"/><ellipse cx="349.5" cy="62.0" rx="3" ry="3" opacity="0.6"/><ellipse cx="291.5" cy="52.0" rx="4" ry="3" opacity="0.6"/><ellipse cx="161.5" cy="47.0" rx="3" ry="3" opacity="0.6"/><ellipse cx="236.5" cy="47.0" rx="4" ry="4" opacity="0.7"/><ellipse cx="186.5" cy="37.0" rx="3" ry="3" opacity="0.6"/></g>
<g filter="url(#mb1)"><ellipse cx="249.5" cy="41.0" rx="9" ry="6" opacity="0.55" fill="#c4c4c4"/><ellipse cx="261.5" cy="133.5" rx="10" ry="8" opacity="0.65" fill="#c9c9c9"/><ellipse cx="221.5" cy="116.0" rx="6" ry="4" opacity="0.55" fill="#c8c8c8"/><ellipse cx="206.0" cy="142.0" rx="12" ry="19" opacity="0.5" fill="#8d8d8d"/><ellipse cx="311.5" cy="109.0" rx="9" ry="5" opacity="0.5" fill="#c0c0c0"/><ellipse cx="169.5" cy="187.0" rx="8" ry="5" opacity="0.7" fill="#cfcfcf"/><ellipse cx="182.5" cy="220.0" rx="6" ry="4" opacity="0.7" fill="#c9c9c9"/><ellipse cx="270.0" cy="186.5" rx="8" ry="4" opacity="0.65" fill="#c4c4c4"/><ellipse cx="231.5" cy="262.0" rx="10" ry="5" opacity="0.75" fill="#bdbdbd"/><ellipse cx="293.5" cy="245.0" rx="8" ry="4" opacity="0.7" fill="#c4c4c4"/><ellipse cx="255.1" cy="217.0" rx="8" ry="5" opacity="0.6" fill="#bcbcbc"/><ellipse cx="278.5" cy="209.0" rx="14" ry="8" opacity="0.35" fill="#9a9a9a"/><ellipse cx="297.5" cy="187.0" rx="10" ry="4" opacity="0.5" fill="#bdbdbd"/><ellipse cx="206.5" cy="279.0" rx="8" ry="4" opacity="0.6" fill="#aaa"/><ellipse cx="331.5" cy="157.0" rx="6" ry="10" opacity="0.4" fill="#bbb"/><ellipse cx="207.5" cy="90.0" rx="5" ry="3" opacity="0.5" fill="#c8c8c8"/><ellipse cx="301.5" cy="80.0" rx="4.5" ry="2.5" opacity="0.5" fill="#ccc"/><ellipse cx="371.5" cy="29.0" rx="18" ry="10" opacity="0.25" fill="#c0c0c0"/><ellipse cx="151.5" cy="17.0" rx="14" ry="10" opacity="0.2" fill="#c0c0c0"/><ellipse cx="321.5" cy="37.0" rx="20" ry="14" opacity="0.2" fill="#bbb"/></g>
</g>
<rect width="463.5" height="300" fill="url(#md)"/>
<path d="M120 235L135 258 175 290 240 300H110z" fill="#000" filter="url(#mb6)" opacity=".9"/>
<path d="M345 200L335 300H300L320 250z" fill="#000" filter="url(#mb6)" opacity=".8"/></svg>
<svg class="b" style="left:749.5px;top:283px;" width="277.5" height="378.5" viewBox="0 0 277.5 378.5"><defs>
<linearGradient id="sky" x1="0" y1="0" x2="0" y2="1"><stop offset="0" stop-color="#1b5aa8"/><stop offset="0.45" stop-color="#2f7cc4"/><stop offset="1" stop-color="#6fb0dd"/></linearGradient>
<radialGradient id="glow" cx="0.5" cy="0.5" r="0.5"><stop offset="0" stop-color="#fffbe8"/><stop offset="0.45" stop-color="#f8e6b8" stop-opacity=".9"/><stop offset="1" stop-color="#e6cf9e" stop-opacity="0"/></radialGradient>
<linearGradient id="body" x1="0" y1="0" x2="1" y2="0"><stop offset="0" stop-color="#b9b5a8"/><stop offset="0.35" stop-color="#efece2"/><stop offset="0.75" stop-color="#dedad0"/><stop offset="1" stop-color="#a5a196"/></linearGradient>
<linearGradient id="sm" x1="0" y1="0" x2="1" y2="0"><stop offset="0" stop-color="#566468"/><stop offset="0.4" stop-color="#93a3a6"/><stop offset="1" stop-color="#5d6a6e"/></linearGradient>
<filter id="rb1" x="-10%" y="-10%" width="120%" height="120%"><feGaussianBlur stdDeviation="1.2"/></filter>
<filter id="rb3" x="-20%" y="-20%" width="140%" height="140%"><feGaussianBlur stdDeviation="3.5"/></filter>
<filter id="rsm" x="0" y="0" width="277.5" height="378.5" filterUnits="userSpaceOnUse"><feTurbulence type="fractalNoise" baseFrequency="0.045" numOctaves="2" seed="3" result="t"/><feDisplacementMap in="SourceGraphic" in2="t" scale="16" xChannelSelector="R" yChannelSelector="G"/><feGaussianBlur stdDeviation="2.2"/></filter>
<linearGradient id="rnm" x1="0" y1="0" x2="0" y2="1"><stop offset="0.3" stop-color="#000"/><stop offset="0.5" stop-color="#fff"/></linearGradient><mask id="rnk" maskUnits="userSpaceOnUse" x="0" y="0" width="277.5" height="378.5"><rect width="277.5" height="378.5" fill="url(#rnm)"/></mask>
<filter id="rb8" x="-30%" y="-30%" width="160%" height="160%"><feGaussianBlur stdDeviation="8"/></filter>
<filter id="rn" x="0" y="0" width="100%" height="100%"><feTurbulence type="fractalNoise" baseFrequency="0.05" numOctaves="3" seed="11"/><feColorMatrix type="matrix" values="0 0 0 0 0  0 0 0 0 0  0 0 0 0 0  2.4 0 0 0 -1.1"/></filter>
<clipPath id="rc"><rect width="277.5" height="378.5"/></clipPath>
</defs>
<g clip-path="url(#rc)">
<rect width="277.5" height="378.5" fill="#4a2418"/>
<rect width="277.5" height="120" fill="url(#sky)"/>
<g filter="url(#rb3)">
<path d="M0 60Q50 50 90 42T200 20L277 8" stroke="#5d9ed6" stroke-width="9" fill="none" opacity=".55"/>
<path d="M0 20Q80 0 180 10" stroke="#3f86c9" stroke-width="10" fill="none" opacity=".5"/>
<path d="M0 55Q40 60 75 92L0 110z" fill="#86c0e6" opacity=".85"/><ellipse cx="40" cy="86" rx="30" ry="5" fill="#e4f0f8" opacity=".7"/><ellipse cx="245" cy="82" rx="22" ry="9" fill="#a6cde8" opacity=".65"/>
</g>
<!-- horizon: water / land -->
<path d="M0 111L67 96Q140 88 190 94L277.5 106V380H0z" fill="#1b3d77"/>
<path d="M0 119L64 104 66 111 0 130z" fill="#33525a" filter="url(#rb1)"/>
<path d="M190 94L277.5 106V113L190 100z" fill="#2f6cb2" filter="url(#rb1)"/>
<path d="M190 109L237 111 277.5 121V127L190 118z" fill="#1b2a42" filter="url(#rb1)"/>
<path d="M0 155L92 137 94 146 0 167z" fill="#a0a6ab" filter="url(#rb1)"/>
<path d="M186 121L277.5 128V168L230 160 188 152z" fill="#c8ccc8" filter="url(#rb3)"/>
<path d="M196 138Q240 136 277.5 152" stroke="#8b9698" stroke-width="4" fill="none" filter="url(#rb3)"/>
<path d="M196 126Q240 124 277.5 134" stroke="#e4e6e2" stroke-width="3" fill="none" filter="url(#rb3)"/>
<!-- ground -->
<path d="M0 165L95 146 130 380H0z" fill="#63291b" filter="url(#rb1)"/>
<path d="M165 158L277.500 166V380H165z" fill="#3a1b14" filter="url(#rb1)"/>
<path d="M180 160L277.500 168V250L200 262z" fill="#2a130e" filter="url(#rb3)"/>
<path d="M0 190L50 172 30 330 0 340z" fill="#7a3826" filter="url(#rb3)" opacity=".75"/><path d="M10 175L60 165 45 250 20 300z" fill="#3a1812" filter="url(#rb3)" opacity=".5"/>
<path d="M252 177l10-2 2 4-10 2z" fill="#f0f0f0"/>
<!-- pad -->
<path d="M96 160L38 314 33 323 65 368 70 378H215L277.500 330V250L230 215 190 230 165 160z" fill="#d8d0ba" filter="url(#rb3)"/>
<path d="M45 270L100 165 120 165 66 315z" fill="#c9bda0" filter="url(#rb1)" opacity=".8"/>
<path d="M78 189L86 189 50 290 42 290z" fill="#e6dcc0" filter="url(#rb1)" opacity=".8"/>
<ellipse cx="145" cy="255" rx="70" ry="110" fill="url(#glow)"/>
<ellipse cx="192" cy="275" rx="45" ry="70" fill="url(#glow)" opacity=".9"/>
<ellipse cx="150" cy="310" rx="75" ry="50" fill="url(#glow)" opacity=".8"/>
<path d="M176 185Q215 176 255 192L258 236 225 246 196 232z" fill="#35140d" filter="url(#rb8)" opacity=".95"/>
<path d="M180 182Q225 172 262 192V212Q230 195 190 213z" fill="#260d08" filter="url(#rb3)" opacity=".9"/>
<!-- right side structures -->
<path d="M238 200L277.500 190V264L242 262z" fill="#c9c1b8" filter="url(#rb3)"/>
<path d="M236 264L277.500 256V324L250 322z" fill="#818b97" filter="url(#rb3)"/>
<path d="M244 270l16-3 2 12-16 3z" fill="#2c323c" filter="url(#rb1)" opacity=".8"/><path d="M255 300l22-8v26l-18 4z" fill="#5a6270" filter="url(#rb1)"/>
<path d="M172 296L222 290M172 302L226 294" stroke="#8a8478" stroke-width="1.200" opacity=".8"/>
<!-- smoke -->
<g filter="url(#rsm)">
<ellipse cx="110" cy="100" rx="36" ry="40" fill="#cfa673"/><ellipse cx="150" cy="85" rx="32" ry="34" fill="#d3ab78"/><ellipse cx="85" cy="130" rx="26" ry="26" fill="#c99f6b"/>
<ellipse cx="170" cy="130" rx="20" ry="34" fill="#b98a58"/><ellipse cx="115" cy="160" rx="42" ry="40" fill="#d7b283"/><ellipse cx="104" cy="186" rx="30" ry="22" fill="#dcb98a"/><ellipse cx="173" cy="176" rx="15" ry="30" fill="#d1a672"/>
<ellipse cx="125" cy="120" rx="26" ry="30" fill="#e0bd8e" opacity=".8"/><ellipse cx="172" cy="105" rx="12" ry="20" fill="#96673f" opacity=".8"/><ellipse cx="100" cy="85" rx="14" ry="12" fill="#e3c496" opacity=".8"/><ellipse cx="140" cy="70" rx="14" ry="10" fill="#ddb988" opacity=".8"/><ellipse cx="70" cy="112" rx="10" ry="10" fill="#d8b88c"/>
</g>
<g mask="url(#rnk)"><rect width="277.5" height="378.5" filter="url(#rn)" opacity=".2"/></g>
<!-- left tower -->
<path d="M3 0L6 120 18 260 34 300" stroke="#24140f" stroke-width="3" fill="none" opacity=".8"/>
<path d="M0 250L22 255 50 378H0z" fill="#1f1210" filter="url(#rb3)"/>
<path d="M0 330Q60 340 110 378H0z" fill="#2a1a1a" filter="url(#rb1)"/>
<path d="M22 300L40 290 62 360 48 372z" fill="#b9b4ac" filter="url(#rb1)" opacity=".85"/>
<path d="M0 348Q40 352 60 378" stroke="#a83222" stroke-width="4" fill="none" filter="url(#rb1)"/>
<!-- bottom red structure -->
<path d="M120 372Q190 350 245 305" stroke="#c4512c" stroke-width="13" fill="none" filter="url(#rb1)"/>
<path d="M120 372Q190 350 245 305" stroke="#5a2418" stroke-width="4" stroke-dasharray="3 4" fill="none"/>
<path d="M205 300L245 285 255 305 225 325z" fill="#d2602f" filter="url(#rb1)"/>
<path d="M200 378L277.500 325V378z" fill="#1d1b2b" filter="url(#rb3)"/>
<path d="M250 290L277.500 275V325L262 330z" fill="#5f6470" filter="url(#rb1)"/>
<!-- rocket -->
<path d="M143.500 16L147.500 13.500 151 16.500V82L154 86H139L142.500 82z" fill="#e9e8e2" filter="url(#rb1)"/>
<path d="M140 86H153.500L156 112H137z" fill="#c9c3b3" opacity=".9"/><path d="M140 86L156 112M153.500 86L137 112M138.500 99H155" stroke="#7a6f5e" stroke-width="1"/>
<path d="M141 110H152L168 142H124z" fill="#c4c3ba" filter="url(#rb1)"/><path d="M143 112H150L158 140H131z" fill="#deddd5" opacity=".8"/>
<rect x="123.500" y="141" width="44.500" height="56" fill="url(#sm)"/><rect x="123.500" y="141" width="44.500" height="7" fill="#d6d6cf"/><rect x="137" y="180" width="24" height="9" fill="#c9c9c2" opacity=".9"/>
<path d="M123.500 197H168L172.500 256H118z" fill="url(#body)"/>
<path d="M118 255Q145 268 172.500 255L171.500 276Q145 290 119.500 276z" fill="#15110f"/>
<path d="M119.500 276Q145 290 171.500 276L168 313Q145 322 122 313z" fill="url(#body)"/><path d="M150 280V318M128 280L129 315" stroke="#9a958a" stroke-width="1.200"/>
<path d="M122 312Q145 322 168 312L171 330Q146 350 119 330z" fill="#0f0e12" filter="url(#rb1)"/>
<path d="M121 334Q145 346 170 334L166 372Q145 380 126 372z" fill="#e6edf5" filter="url(#rb3)"/>
<rect x="138" y="213" width="11" height="6" fill="#fff" opacity=".9"/>
</g></svg>
<svg class="b" style="left:1043.5px;top:283px;" width="162" height="164.5" viewBox="0 0 162 164.5"><defs>
<linearGradient id="lg" x1="0" y1="0" x2="0.35" y2="1"><stop offset="0" stop-color="#8f8a84"/><stop offset="0.35" stop-color="#7d7973"/><stop offset="0.7" stop-color="#66625d"/><stop offset="1" stop-color="#4a4744"/></linearGradient>
<filter id="lb1" x="-10%" y="-10%" width="120%" height="120%"><feGaussianBlur stdDeviation="0.8"/></filter>
<filter id="lb3" x="-20%" y="-20%" width="140%" height="140%"><feGaussianBlur stdDeviation="2.5"/></filter>
<filter id="ln" x="0" y="0" width="100%" height="100%"><feTurbulence type="fractalNoise" baseFrequency="0.14" numOctaves="3" seed="5"/><feColorMatrix type="matrix" values="0 0 0 0 0  0 0 0 0 0  0 0 0 0 0  2.2 0 0 0 -1"/></filter>
<clipPath id="lc"><rect width="162" height="164.5"/></clipPath>
</defs>
<g clip-path="url(#lc)">
<rect width="162" height="164.5" fill="#020202"/>
<path d="M0 101.5Q80 96 162 95.5V165H0z" fill="url(#lg)"/>
<rect y="98" width="162" height="67" filter="url(#ln)" opacity=".28"/>
<path d="M80 145Q120 122 162 120V165H66z" fill="#33312f" filter="url(#lb3)" opacity=".75"/>
<path d="M14 103L108 101 112 113 70 118 24 117z" fill="#171717" filter="url(#lb3)"/>
<ellipse cx="128" cy="118" rx="24" ry="3.500" fill="#2a2a2a" filter="url(#lb3)" opacity=".8"/>
<!-- descent stage -->
<path d="M42 66L121 64.500 121 97 44 98z" fill="#3a2212" filter="url(#lb1)"/>
<path d="M94 68L119 67 119 96 94 97z" fill="#a34a18" filter="url(#lb1)"/><path d="M100 72L114 70 116 90 102 92z" fill="#c4581c" filter="url(#lb1)" opacity=".8"/><path d="M96 76L106 90M110 72L100 94" stroke="#4a1c0a" stroke-width="1.800" opacity=".7"/>
<path d="M45 72L60 72 62 96 47 97z" fill="#5a2c12" filter="url(#lb1)"/><path d="M46 74L58 90" stroke="#c78a3a" stroke-width="2.200"/>
<path d="M62 79H94V98H62z" fill="#cfc8a2" filter="url(#lb1)"/><path d="M64 83H92M64 88H92" stroke="#77735c" stroke-width="1.500" opacity=".7"/><path d="M91 74h4v23h-4z" fill="#d9b356" filter="url(#lb1)"/>
<path d="M42 64.500H121V76H44z" fill="#22262f" filter="url(#lb1)"/><path d="M60 66H92V76H60z" fill="#34405a" filter="url(#lb1)" opacity=".8"/>
<!-- ascent stage -->
<path d="M45 40L60 37 72 44 70 60 56 63 47 52z" fill="#3b4357" filter="url(#lb1)"/><path d="M50 42L60 39 66 50 58 58z" fill="#5c6884" filter="url(#lb1)"/>
<path d="M44 42h5v12h-5z" fill="#8a8a80" filter="url(#lb1)"/>
<path d="M57 18L68 16 70 38 62 42z" fill="#b3a273" filter="url(#lb1)"/><path d="M55 17L64 22" stroke="#d9d3b8" stroke-width="1.400"/>
<path d="M72 19L84 16 85 64 73 64z" fill="#262a36" filter="url(#lb1)"/><path d="M74 17L84 15 84 26 76 32z" fill="#7d8596" filter="url(#lb1)"/>
<path d="M84 26Q88 18 100 22L112 28 117 42 112 54 100 56 86 50z" fill="#f3f1ee" filter="url(#lb1)"/><path d="M70 24Q76 14 90 17L84 30 78 44 70 40z" fill="#d5d2cb" filter="url(#lb1)" opacity=".9"/>
<path d="M84 52L98 56 96 63 84 62z" fill="#c4521c" filter="url(#lb1)"/><path d="M82 46L94 60" stroke="#d8703a" stroke-width="1.600"/>
<path d="M100 56L114 54 118 66 98 66z" fill="#2c2f3b" filter="url(#lb1)"/><path d="M117 38l3 0 0 12-3 0z" fill="#9a9a94" filter="url(#lb1)"/>
<path d="M87.400 0V17" stroke="#6d6d6d" stroke-width="1"/><path d="M94 20L106 17M60 18L54 15" stroke="#bdb7a0" stroke-width="1.200"/>
<!-- legs -->
<path d="M42 68.500L19.500 122" stroke="#c4923f" stroke-width="4.600" filter="url(#lb1)"/><path d="M45 72L56 86" stroke="#b36a26" stroke-width="2.600" filter="url(#lb1)"/><path d="M30 100L62 96" stroke="#3a3a3a" stroke-width="1.600"/>
<path d="M117 68.500L140.500 119" stroke="#c18c3d" stroke-width="4.600" filter="url(#lb1)"/><path d="M117 68.500L140.500 119" stroke="#7a4a1c" stroke-width="4.600" stroke-dasharray="2 3.500" opacity=".55"/>
<path d="M109 82L125 107" stroke="#8a5a24" stroke-width="2.400" filter="url(#lb1)"/><path d="M120 97L126 113" stroke="#b07a30" stroke-width="2.600" filter="url(#lb1)"/>
<ellipse cx="18" cy="122" rx="6" ry="2" fill="#b88a38"/><ellipse cx="145" cy="120" rx="7" ry="2" fill="#b88636"/>
<path d="M115.300 96V121" stroke="#c9c9c9" stroke-width="1.300"/><path d="M131 92h3v5h-3z" fill="#bbb"/>
<!-- astronaut -->
<path d="M68.500 85Q74 83 80 85V106H68.500z" fill="#f0f0ee" filter="url(#lb1)"/><path d="M66 106H72.500L71.500 122H65zM73.500 106H79L79.500 122H74z" fill="#e6e6e3" filter="url(#lb1)"/>
<path d="M80 102L94 104 93 109 82 108z" fill="#e4e4e4" filter="url(#lb1)"/><path d="M86 96l5 0 1 10-5 0z" fill="#1c1c22" filter="url(#lb1)"/>
<rect x="43.500" y="114.500" width="3.500" height="5" fill="#ddd"/><rect x="80" y="131" width="4" height="5" fill="#2e2e2e" opacity=".8"/><path d="M90 135l5-6 5 6z" fill="#8c8a88" filter="url(#lb1)"/>
</g></svg>
<div class="b" style="left:0px;top:766px;width:1500.00px;height:22.00px;background:#e6e6e6;"></div>
<div class="b" style="left:0px;top:765.5px;width:1500.00px;height:1.00px;background:#c8c8c8;"></div>
<svg class="b" style="left:19px;top:771px;" width="6" height="8" viewBox="0 0 6 8"><path d="M4.500 1L1.500 4l3 3z" fill="#c6c6c6"/></svg>
<svg class="b" style="left:41px;top:771px;" width="6" height="8" viewBox="0 0 6 8"><path d="M1.500 1L4.500 4l-3 3z" fill="#c6c6c6"/></svg>
<div class="b" style="left:78px;top:766px;width:154.00px;height:19.50px;background:#fff;border-bottom:2px solid #217346;border-left:1px solid #c8c8c8;border-right:1px solid #c8c8c8;box-sizing:border-box;"></div>
<span class="t" style="left:87.5px;top:768.7px;font-size:10.5px;line-height:14px;color:#217346;font-family:'Liberation Sans',sans-serif;transform:scaleX(0.9448);font-weight:700;">Number of Rocket Launches</span>
<svg class="b" style="left:257px;top:769px;" width="14" height="14" viewBox="0 0 14 14"><circle cx="7" cy="7" r="5.800" fill="none" stroke="#777" stroke-width="1"/><path d="M7 4v6M4 7h6" stroke="#777" stroke-width="1.100"/></svg>
<div class="b" style="left:1010.5px;top:771.5px;width:1.20px;height:1.20px;background:#aaa;"></div>
<div class="b" style="left:1010.5px;top:775px;width:1.20px;height:1.20px;background:#aaa;"></div>
<div class="b" style="left:1010.5px;top:778.5px;width:1.20px;height:1.20px;background:#aaa;"></div>
<div class="b" style="left:1027.5px;top:771.5px;width:455.00px;height:11.00px;background:#fff;border:1px solid #c8c8c8;box-sizing:border-box;"></div>
<div class="b" style="left:1457px;top:772.5px;width:14.50px;height:9.00px;background:#d0d0d0;"></div>
<div class="b" style="left:1038.5px;top:771.5px;width:1.00px;height:11.00px;background:#c8c8c8;"></div>
<div class="b" style="left:1471px;top:771.5px;width:1.00px;height:11.00px;background:#c8c8c8;"></div>
<svg class="b" style="left:1030.5px;top:773.5px;" width="5" height="7" viewBox="0 0 5 7"><path d="M4 0.500L1 3.500l3 3z" fill="#555"/></svg>
<svg class="b" style="left:1474.5px;top:773.5px;" width="5" height="7" viewBox="0 0 5 7"><path d="M1 0.500L4 3.500l-3 3z" fill="#555"/></svg>
<div class="b" style="left:0px;top:787.5px;width:1500.00px;height:25.00px;background:#f1f1f1;"></div>
<div class="b" style="left:0px;top:787.5px;width:1500.00px;height:0.80px;background:#dcdcdc;"></div>
<span class="t" style="left:9.5px;top:794.0px;font-size:9px;line-height:12px;color:#555;font-family:'Liberation Sans',sans-serif;transform:scaleX(0.9417);">Ready</span>
<span class="t" style="left:1024.0px;top:794.0px;font-size:9px;line-height:12px;color:#555;font-family:'Liberation Sans',sans-serif;transform:scaleX(0.9404);">Average: 41.05882353</span>
<span class="t" style="left:1131.5px;top:794.0px;font-size:9px;line-height:12px;color:#555;font-family:'Liberation Sans',sans-serif;transform:scaleX(1.0121);">Count: 36</span>
<span class="t" style="left:1192.5px;top:794.0px;font-size:9px;line-height:12px;color:#555;font-family:'Liberation Sans',sans-serif;transform:scaleX(0.9345);">Sum: 698</span>
<div class="b" style="left:1248px;top:788px;width:36.00px;height:24.50px;background:#c6c6c6;"></div>
<svg class="b" style="left:1259px;top:793.5px;" width="14" height="14" viewBox="0 0 14 14"><path d="M1 1h12v12H1zM5 1v12M9 1v12M1 5h12M1 9h12" fill="none" stroke="#777" stroke-width="1"/></svg>
<svg class="b" style="left:1295px;top:793.5px;" width="14" height="14" viewBox="0 0 14 14"><rect x="1" y="1" width="12" height="12" fill="none" stroke="#777" stroke-width="1"/><rect x="4" y="3.500" width="6" height="7" fill="none" stroke="#777" stroke-width="1"/><path d="M5.500 6h3M5.500 8h3" stroke="#777" stroke-width="0.800"/></svg>
<svg class="b" style="left:1331px;top:793.5px;" width="14" height="14" viewBox="0 0 14 14"><path d="M1 1h12v12H1z M1 7.500h6.500V1 M4.500 1v4" fill="none" stroke="#777" stroke-width="1"/></svg>
<div class="b" style="left:1360px;top:799.5px;width:4.00px;height:1.20px;background:#555;"></div>
<div class="b" style="left:1367px;top:799.7px;width:79.00px;height:0.80px;background:#9a9a9a;"></div>
<div class="b" style="left:1401px;top:795px;width:3.00px;height:10.00px;background:#555;"></div>
<div class="b" style="left:1449px;top:799.5px;width:6.00px;height:1.20px;background:#555;"></div>
<div class="b" style="left:1451.4px;top:797px;width:1.20px;height:6.00px;background:#555;"></div>
<span class="t" style="left:1471.5px;top:794.0px;font-size:9px;line-height:12px;color:#555;font-family:'Liberation Sans',sans-serif;transform:scaleX(0.9160);">90%</span>
<div class="b" style="left:0px;top:812.5px;width:1500.00px;height:31.50px;background:#0c0c0c;"></div>
<div class="b" style="left:37px;top:812.5px;width:269.00px;height:31.50px;background:#3a3a3a;"></div>
<svg class="b" style="left:11px;top:821px;" width="15" height="15" viewBox="0 0 15 15"><path d="M0 2.200L6 1.300V7H0zM7 1.200L14.500 0V7H7zM0 8h6v5.700L0 12.800zM7 8h7.500v7L7 13.900z" fill="#fff"/></svg>
<svg class="b" style="left:43px;top:819px;" width="18" height="18" viewBox="0 0 18 18"><circle cx="9" cy="9" r="6.500" fill="none" stroke="#fff" stroke-width="2.200"/></svg>
<span class="t" style="left:68.0px;top:820.0px;font-size:12px;line-height:16px;color:#c8c8c8;font-family:'Liberation Sans',sans-serif;transform:scaleX(0.9582);">Ask me anything</span>
<svg class="b" style="left:284px;top:820px;" width="12" height="17" viewBox="0 0 12 17"><rect x="3.500" y="1" width="5" height="9" rx="2.500" fill="none" stroke="#bbb" stroke-width="1.100"/><path d="M1.500 8c0 3 2 4.500 4.500 4.500s4.500-1.500 4.500-4.500M6 12.500V15.500M3.500 15.500h5" fill="none" stroke="#bbb" stroke-width="1.100"/></svg>
<svg class="b" style="left:315px;top:820px;" width="20" height="16" viewBox="0 0 20 16"><rect x="4.500" y="2.500" width="11" height="11" fill="none" stroke="#fff" stroke-width="1.600"/><path d="M2 5v6M18 5v6" stroke="#fff" stroke-width="1.600"/></svg>
<svg class="b" style="left:353px;top:818px;" width="21" height="19" viewBox="0 0 21 19"><path d="M1 2.500h7l1.500 2H20v12H1z" fill="#f5d36b"/><path d="M1 6.500h19v10H1z" fill="#fbe99a"/><rect x="5" y="10" width="11" height="6.500" fill="#59b4e6"/><rect x="7.500" y="12.500" width="6" height="4" fill="#f5f5f5"/></svg>
<div class="b" style="left:348px;top:842px;width:31.00px;height:2.00px;background:#8ac4ee;"></div>
<svg class="b" style="left:393px;top:819px;" width="19" height="19" viewBox="0 0 19 19"><path d="M1.500 9.500C2 4 5.500 1 10 1c4.500 0 7.500 3 7.500 7.500v2.500H7c.3 2.500 2 3.800 4.800 3.800 2 0 3.500-.5 5-1.400v3.600c-1.700 1-3.800 1.500-6 1.500-5 0-8-3-8-7.500 0-2.500 1.200-4.500 3.500-6C4.500 5.800 2.800 7 1.500 9.500zM7 7.800h6c0-2-1.200-3.300-3-3.300S7.200 5.800 7 7.800z" fill="#2b88d8"/></svg>
<svg class="b" style="left:430px;top:818px;" width="19" height="20" viewBox="0 0 19 20"><path d="M1 6h17v12.500H1z" fill="#fff"/><path d="M6 6V3.500a3.500 3.500 0 0 1 7 0V6" fill="none" stroke="#fff" stroke-width="1.300"/><path d="M6.500 9.200l2.500-.4v3H6.500zM9.800 8.700l3-.5v3.600h-3zM6.500 12.600H9v3l-2.500-.4zM9.800 12.600h3v3.600l-3-.5z" fill="#0c0c0c"/></svg>
<div class="b" style="left:460px;top:812.5px;width:37.00px;height:31.50px;background:#3a3a3a;"></div>
<div class="b" style="left:460px;top:842px;width:37.00px;height:2.00px;background:#8ac4ee;"></div>
<svg class="b" style="left:468px;top:818px;" width="20" height="20" viewBox="0 0 20 20"><rect x="8" y="2.500" width="11" height="15" fill="#fff"/><path d="M10 5h3.500v2H10zM14.500 5H18v2h-3.500zM10 8.500h3.500v2H10zM14.500 8.500H18v2h-3.500zM10 12h3.500v2H10zM14.500 12H18v2h-3.500z" fill="#217346"/><path d="M0 2.200L11.500 0.500v19L0 17.800z" fill="#1e7145"/></svg>
<span class="t" style="left:472.5px;top:822.0px;font-size:9px;line-height:12px;color:#fff;font-family:'Liberation Sans',sans-serif;transform:scaleX(0.9995);font-weight:700;">X</span>
<svg class="b" style="left:1291px;top:823px;" width="13" height="9" viewBox="0 0 13 9"><path d="M1.500 7.500L6.500 2.500l5 5" fill="none" stroke="#fff" stroke-width="1.600"/></svg>
<svg class="b" style="left:1314px;top:820px;" width="17" height="14" viewBox="0 0 17 14"><rect x="5" y="4.500" width="10" height="7" fill="none" stroke="#fff" stroke-width="1.400"/><rect x="15" y="6.500" width="1.500" height="3" fill="#fff"/><path d="M3 1v4M1.500 2.500h3M2.500 5v3.500h3" stroke="#fff" stroke-width="1.300" fill="none"/></svg>
<svg class="b" style="left:1341px;top:820px;" width="15" height="14" viewBox="0 0 15 14"><path d="M2 12A10 10 0 0 1 12 2" fill="none" stroke="#fff" stroke-width="1.500"/><path d="M5.500 12A6.500 6.500 0 0 1 12 5.500" fill="none" stroke="#fff" stroke-width="1.500"/><path d="M9 12a3 3 0 0 1 3-3" fill="none" stroke="#fff" stroke-width="1.500"/><circle cx="12" cy="12" r="1.300" fill="#fff"/></svg>
<svg class="b" style="left:1364px;top:820px;" width="16" height="14" viewBox="0 0 16 14"><path d="M1.500 5h3l3.500-3v10l-3.500-3h-3z" fill="none" stroke="#fff" stroke-width="1.200"/><path d="M10 4.500a3.500 3.500 0 0 1 0 5M12 2.500a6 6 0 0 1 0 9" fill="none" stroke="#fff" stroke-width="1.200"/></svg>
<svg class="b" style="left:1389px;top:820px;" width="16" height="15" viewBox="0 0 16 15"><path d="M1.500 1.500h13v9.500H10l-2 2.200-2-2.200H1.500z" fill="none" stroke="#fff" stroke-width="1.400"/><path d="M4 4.500h8M4 7.500h6" stroke="#fff" stroke-width="1.100"/></svg>
<svg class="b" style="left:1414px;top:822px;" width="21" height="12" viewBox="0 0 21 12"><rect x="1" y="1" width="19" height="10" rx="1" fill="none" stroke="#fff" stroke-width="1.400"/><path d="M3.500 4h14M3.500 6.300h14" stroke="#fff" stroke-width="1" stroke-dasharray="1.500 1"/><path d="M6 8.700h9" stroke="#fff" stroke-width="1"/></svg>
<span class="t" style="left:1451.5px;top:815.0px;font-size:9.5px;line-height:12px;color:#fff;font-family:'Liberation Sans',sans-serif;transform:scaleX(0.9469);-webkit-text-stroke:0.3px #fff;">4:48 PM</span>
<span class="t" style="left:1447.5px;top:828.0px;font-size:9.5px;line-height:12px;color:#fff;font-family:'Liberation Sans',sans-serif;transform:scaleX(0.9938);-webkit-text-stroke:0.3px #fff;">3/28/2016</span>
<div class="b" style="left:1495.5px;top:812.5px;width:0.80px;height:31.50px;background:#555;"></div>
<div class="b" style="left:490.5px;top:50px;width:173.00px;height:134.50px;background:#fff;box-shadow:0 1px 4px rgba(0,0,0,.35);border:1px solid #d0d0d0;box-sizing:border-box;"></div>
<span class="t" style="left:516.3px;top:54.3px;font-size:9.5px;line-height:12px;color:#5a5a5a;font-family:'Liberation Sans',sans-serif;transform:scaleX(0.9638);">Recommended Charts</span>
<span class="t" style="left:516.3px;top:73.2px;font-size:9.5px;line-height:12px;color:#5a5a5a;font-family:'Liberation Sans',sans-serif;transform:scaleX(0.9646);">Insert Column or Bar Chart</span>
<svg class="b" style="left:652px;top:76.2px;" width="4" height="6" viewBox="0 0 4 6"><path d="M0.500 0.500L3.500 3l-3 2.500z" fill="#555"/></svg>
<span class="t" style="left:516.3px;top:92.0px;font-size:9.5px;line-height:12px;color:#5a5a5a;font-family:'Liberation Sans',sans-serif;transform:scaleX(0.9529);">Insert Statistic Chart</span>
<svg class="b" style="left:652px;top:95px;" width="4" height="6" viewBox="0 0 4 6"><path d="M0.500 0.500L3.500 3l-3 2.500z" fill="#555"/></svg>
<span class="t" style="left:516.3px;top:110.7px;font-size:9.5px;line-height:12px;color:#5a5a5a;font-family:'Liberation Sans',sans-serif;transform:scaleX(0.9536);">Insert Line or Area Chart</span>
<svg class="b" style="left:652px;top:113.7px;" width="4" height="6" viewBox="0 0 4 6"><path d="M0.500 0.500L3.500 3l-3 2.500z" fill="#555"/></svg>
<span class="t" style="left:516.3px;top:129.4px;font-size:9.5px;line-height:12px;color:#5a5a5a;font-family:'Liberation Sans',sans-serif;transform:scaleX(0.9647);">Insert Waterfall or Stock Chart</span>
<svg class="b" style="left:652px;top:132.4px;" width="4" height="6" viewBox="0 0 4 6"><path d="M0.500 0.500L3.500 3l-3 2.500z" fill="#555"/></svg>
<span class="t" style="left:516.3px;top:149.3px;font-size:9.5px;line-height:12px;color:#5a5a5a;font-family:'Liberation Sans',sans-serif;transform:scaleX(0.9659);">Get Help on &quot;Recommended ...</span>
<span class="t" style="left:516.3px;top:168.5px;font-size:9.5px;line-height:12px;color:#5a5a5a;font-family:'Liberation Sans',sans-serif;transform:scaleX(0.9709);">Smart Lookup on &quot;Recomme...</span>
<div class="b" style="left:512px;top:145px;width:151.00px;height:1.00px;background:#e1e1e1;"></div>
<svg class="b" style="left:495px;top:54px;" width="14" height="13" viewBox="0 0 14 13"><rect x="1" y="6" width="2.500" height="6" fill="#3f6f9f"/><rect x="4.500" y="2" width="2.500" height="10" fill="#d9b97a"/><path d="M8.500 4.500c0-2 4-2 4 0 0 1.500-2 1.500-2 3.500" fill="none" stroke="#3f6f9f" stroke-width="1.200"/><circle cx="10.500" cy="10.800" r="0.900" fill="#3f6f9f"/><path d="M7.500 1h1M9.500 1h1" stroke="#d9b97a" stroke-width="1"/></svg>
<svg class="b" style="left:495px;top:73px;" width="14" height="13" viewBox="0 0 14 13"><rect x="1" y="5" width="2.500" height="7" fill="#3f6f9f"/><rect x="4.500" y="1.500" width="2.500" height="10.500" fill="#d9b97a"/><rect x="8" y="3.500" width="2.500" height="8.500" fill="#d9b97a"/></svg>
<svg class="b" style="left:495px;top:91.5px;" width="14" height="13" viewBox="0 0 14 13"><rect x="0.500" y="6" width="2" height="6" fill="#3f6f9f"/><rect x="3.500" y="1" width="2" height="11" fill="#3f6f9f"/><rect x="6.500" y="3.500" width="2" height="8.500" fill="#3f6f9f"/><rect x="9.500" y="7" width="2" height="5" fill="#3f6f9f"/></svg>
<svg class="b" style="left:494.5px;top:109px;" width="15" height="15" viewBox="0 0 15 15"><path d="M1 13L4 1.500l3.500 11.500 3.500-11.500 3 11.500" fill="none" stroke="#4a5560" stroke-width="0.900"/><path d="M1 2.500l3 10.500 3.500-10.500 3.500 10.500 3-10.500" fill="none" stroke="#3f6f9f" stroke-width="0.900"/><path d="M1 9h13" stroke="#4a5560" stroke-width="0.700"/></svg>
<svg class="b" style="left:495px;top:129px;" width="14" height="13" viewBox="0 0 14 13"><path d="M1.500 12V7.500h3V2.500h4v5h3V12" fill="none" stroke="#4a5560" stroke-width="1.600"/><rect x="4.500" y="2" width="2" height="2" fill="#d9b97a"/></svg>
<svg class="b" style="left:494.5px;top:148.5px;" width="14" height="14" viewBox="0 0 14 14"><circle cx="7" cy="7" r="6.300" fill="#3f6f9f"/><path d="M4.800 5.500c0-3 4.500-3 4.500-.2 0 1.700-2.200 1.700-2.200 3.500" fill="none" stroke="#fff" stroke-width="1.500"/><circle cx="7.100" cy="10.800" r="0.950" fill="#fff"/></svg>
<svg class="b" style="left:494px;top:167.5px;" width="15" height="15" viewBox="0 0 15 15"><circle cx="8.500" cy="6" r="4.800" fill="#fff" stroke="#3f6f9f" stroke-width="1.400"/><path d="M5 9.500L1 13.500" stroke="#3f6f9f" stroke-width="2"/><path d="M8.500 5.500v3" stroke="#3f6f9f" stroke-width="1.300"/><circle cx="8.500" cy="3.700" r="0.800" fill="#3f6f9f"/></svg>

</body></html>
